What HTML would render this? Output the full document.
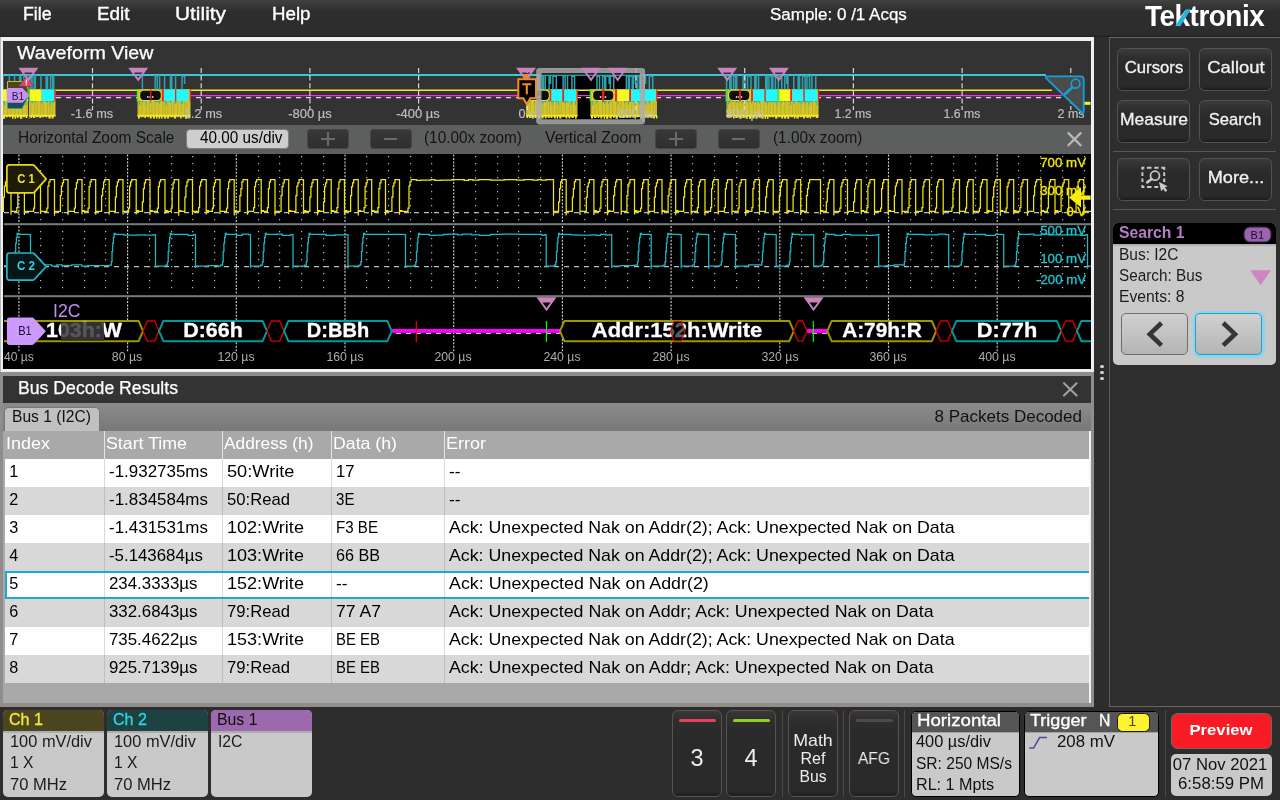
<!DOCTYPE html><html><head><meta charset="utf-8"><title>Scope</title><style>
*{margin:0;padding:0;box-sizing:border-box}
html,body{width:1280px;height:800px;overflow:hidden;background:#2d2d2d;font-family:"Liberation Sans",sans-serif;}
.a{position:absolute}
.t{position:absolute;white-space:nowrap;line-height:1.15}
svg{overflow:visible}
</style></head><body><div id="w" style="position:absolute;left:0;top:0;width:1280px;height:800px;will-change:transform;overflow:hidden">
<div class="a" style="left:0px;top:0px;width:1280px;height:37px;background:linear-gradient(#414141 0px,#383838 5px,#2d2d2d 12px,#2d2d2d 35px,#222 36.5px);"></div>
<div class="t" style="left:22.9px;top:4px;font-size:18px;color:#fff;transform:scaleX(0.9825);transform-origin:left center;-webkit-text-stroke:0.35px #fff;">File</div>
<div class="t" style="left:96.9px;top:4px;font-size:18px;color:#fff;transform:scaleX(1.0477);transform-origin:left center;-webkit-text-stroke:0.35px #fff;">Edit</div>
<div class="t" style="left:175.2px;top:4px;font-size:18px;color:#fff;transform:scaleX(1.1591);transform-origin:left center;-webkit-text-stroke:0.35px #fff;">Utility</div>
<div class="t" style="left:271.9px;top:4px;font-size:18px;color:#fff;transform:scaleX(1.0399);transform-origin:left center;-webkit-text-stroke:0.35px #fff;">Help</div>
<div class="t" style="left:769.7px;top:5px;font-size:16.3px;color:#fff;transform:scaleX(1.0427);transform-origin:left center;-webkit-text-stroke:0.25px #fff;">Sample: 0 /1 Acqs</div>
<div class="t" style="left:1145.2px;top:-1px;font-size:29.6px;color:#fff;font-weight:bold;transform:scaleX(0.9425);transform-origin:left center;letter-spacing:-0.5px;">Tektronix</div>
<svg class="a" style="left:0;top:0" width="1280" height="40"><polygon points="1175.4,25.7 1180.6,25.7 1191,9.3 1186,9.3" fill="#1fb6e0"/></svg>
<div class="a" style="left:0px;top:37px;width:1094px;height:335px;background:#eeeff2;"></div>
<div class="a" style="left:0px;top:37px;width:1px;height:335px;background:#b8b8bc;"></div>
<div class="a" style="left:3px;top:41px;width:1088px;height:328px;background:#333333;"></div>
<div class="t" style="left:17.3px;top:43px;font-size:17.5px;color:#fff;transform:scaleX(1.1228);transform-origin:left center;-webkit-text-stroke:0.25px #fff;">Waveform View</div>
<div class="a" style="left:3px;top:125px;width:1088px;height:29px;background:#5d5e5e;"></div>
<div class="t" style="left:17.8px;top:129px;font-size:15.6px;color:#141414;transform:scaleX(0.9917);transform-origin:left center;">Horizontal Zoom Scale</div>
<div class="a" style="left:185.7px;top:128.7px;width:103.6px;height:20.5px;background:#cecece;border-radius:4px;border:1px solid #808080"></div>
<div class="t" style="left:199.5px;top:129px;font-size:15.6px;color:#000;transform:scaleX(0.9807);transform-origin:left center;">40.00 us/div</div>
<div class="a" style="left:307.3px;top:129.3px;width:41.5px;height:19.6px;background:linear-gradient(#383838,#2f2f2f);border-radius:3px;border:1px solid #454545"></div>
<div class="a" style="left:321.2px;top:138.2px;width:13.8px;height:2.2px;background:#6a6a6a;"></div>
<div class="a" style="left:326.7px;top:132px;width:2.6px;height:14.3px;background:#6a6a6a;"></div>
<div class="a" style="left:370.3px;top:129.3px;width:41.5px;height:19.6px;background:linear-gradient(#383838,#2f2f2f);border-radius:3px;border:1px solid #454545"></div>
<div class="a" style="left:383.6px;top:138.2px;width:13.8px;height:2.2px;background:#6a6a6a;"></div>
<div class="a" style="left:655.3px;top:129.3px;width:41.5px;height:19.6px;background:linear-gradient(#383838,#2f2f2f);border-radius:3px;border:1px solid #454545"></div>
<div class="a" style="left:669.2px;top:138.2px;width:13.8px;height:2.2px;background:#6a6a6a;"></div>
<div class="a" style="left:674.7px;top:132px;width:2.6px;height:14.3px;background:#6a6a6a;"></div>
<div class="a" style="left:718.3px;top:129.3px;width:41.5px;height:19.6px;background:linear-gradient(#383838,#2f2f2f);border-radius:3px;border:1px solid #454545"></div>
<div class="a" style="left:731.6px;top:138.2px;width:13.8px;height:2.2px;background:#6a6a6a;"></div>
<div class="t" style="left:424px;top:129px;font-size:15.6px;color:#141414;transform:scaleX(0.9829);transform-origin:left center;">(10.00x zoom)</div>
<div class="t" style="left:545px;top:129px;font-size:15.6px;color:#141414;transform:scaleX(1.0119);transform-origin:left center;">Vertical Zoom</div>
<div class="t" style="left:772.5px;top:129px;font-size:15.6px;color:#141414;transform:scaleX(0.9832);transform-origin:left center;">(1.00x zoom)</div>
<svg class="a" style="left:1066px;top:131px" width="17" height="17"><path d="M2.4 2.1L14.6 14.3M14.6 2.1L2.4 14.3" stroke="#b7b7b7" stroke-width="2.3" stroke-linecap="round" fill="none"/></svg>
<div class="a" style="left:3px;top:154px;width:1088px;height:215px;background:#000;"></div>
<div class="a" style="left:0px;top:372px;width:1094px;height:335px;background:#928d8b;"></div>
<div class="a" style="left:3px;top:376px;width:1088px;height:27px;background:#333333;"></div>
<div class="t" style="left:17.5px;top:378px;font-size:17.5px;color:#fff;transform:scaleX(1.0091);transform-origin:left center;-webkit-text-stroke:0.25px #fff;">Bus Decode Results</div>
<svg class="a" style="left:1062px;top:381px" width="17" height="17"><path d="M2 2.3L14.6 14.6M14.6 2.3L2 14.6" stroke="#a0a0a8" stroke-width="2.1" stroke-linecap="round" fill="none"/></svg>
<div class="a" style="left:3px;top:403px;width:1088px;height:28px;background:linear-gradient(#8c8c8c,#787878);"></div>
<div class="a" style="left:3.8px;top:407.3px;width:95.8px;height:23.7px;background:#c0c0c0;border-radius:5px 5px 0 0;border:1px solid #7a7a7a;border-bottom:none"></div>
<div class="t" style="left:12.3px;top:407px;font-size:16.5px;color:#111;transform:scaleX(0.9467);transform-origin:left center;">Bus 1 (I2C)</div>
<div class="t" style="left:481.50px;width:600px;text-align:right;top:407px;font-size:16.5px;color:#111;transform:scaleX(1.0309);transform-origin:right center;">8 Packets Decoded</div>
<div class="a" style="left:3px;top:431px;width:1088px;height:272px;background:#a9a9a9;"></div>
<div class="a" style="left:1100px;top:364.5px;width:4px;height:3.5px;background:#cfcfcf;border-radius:2px"></div>
<div class="a" style="left:1100px;top:370.5px;width:4px;height:3.5px;background:#cfcfcf;border-radius:2px"></div>
<div class="a" style="left:1100px;top:376.5px;width:4px;height:3.5px;background:#cfcfcf;border-radius:2px"></div>
<div class="a" style="left:5px;top:431px;width:1084px;height:28px;background:#a9a9a9;"></div>
<div class="t" style="left:6px;top:434px;font-size:16.5px;color:#fff;transform:scaleX(1.0901);transform-origin:left center;">Index</div>
<div class="t" style="left:106px;top:434px;font-size:16.5px;color:#fff;transform:scaleX(1.0773);transform-origin:left center;">Start Time</div>
<div class="t" style="left:223.7px;top:434px;font-size:16.5px;color:#fff;transform:scaleX(1.0495);transform-origin:left center;">Address (h)</div>
<div class="t" style="left:333px;top:434px;font-size:16.5px;color:#fff;transform:scaleX(1.0737);transform-origin:left center;">Data (h)</div>
<div class="t" style="left:446px;top:434px;font-size:16.5px;color:#fff;transform:scaleX(1.0909);transform-origin:left center;">Error</div>
<div class="a" style="left:5px;top:459px;width:1084px;height:28px;background:#ffffff;"></div>
<div class="t" style="left:9.3px;top:462px;font-size:16.2px;color:#000;">1</div>
<div class="t" style="left:108.8px;top:462px;font-size:16.2px;color:#000;transform:scaleX(1.0469);transform-origin:left center;">-1.932735ms</div>
<div class="t" style="left:227px;top:462px;font-size:16.2px;color:#000;transform:scaleX(1.1245);transform-origin:left center;">50:Write</div>
<div class="t" style="left:336px;top:462px;font-size:16.2px;color:#000;transform:scaleX(1.0265);transform-origin:left center;">17</div>
<div class="t" style="left:448.8px;top:462px;font-size:16.2px;color:#000;transform:scaleX(1.0661);transform-origin:left center;">--</div>
<div class="a" style="left:5px;top:487px;width:1084px;height:28px;background:#d8d8d8;"></div>
<div class="t" style="left:9.3px;top:490px;font-size:16.2px;color:#000;">2</div>
<div class="t" style="left:108.8px;top:490px;font-size:16.2px;color:#000;transform:scaleX(1.0469);transform-origin:left center;">-1.834584ms</div>
<div class="t" style="left:227px;top:490px;font-size:16.2px;color:#000;transform:scaleX(1.0285);transform-origin:left center;">50:Read</div>
<div class="t" style="left:336px;top:490px;font-size:16.2px;color:#000;transform:scaleX(0.9335);transform-origin:left center;">3E</div>
<div class="t" style="left:448.8px;top:490px;font-size:16.2px;color:#000;transform:scaleX(1.0661);transform-origin:left center;">--</div>
<div class="a" style="left:5px;top:515px;width:1084px;height:28px;background:#ffffff;"></div>
<div class="t" style="left:9.3px;top:518px;font-size:16.2px;color:#000;">3</div>
<div class="t" style="left:108.8px;top:518px;font-size:16.2px;color:#000;transform:scaleX(1.0469);transform-origin:left center;">-1.431531ms</div>
<div class="t" style="left:227px;top:518px;font-size:16.2px;color:#000;transform:scaleX(1.1153);transform-origin:left center;">102:Write</div>
<div class="t" style="left:336px;top:518px;font-size:16.2px;color:#000;transform:scaleX(0.9329);transform-origin:left center;">F3 BE</div>
<div class="t" style="left:448.8px;top:518px;font-size:16.2px;color:#000;transform:scaleX(1.0974);transform-origin:left center;">Ack: Unexpected Nak on Addr(2); Ack: Unexpected Nak on Data</div>
<div class="a" style="left:5px;top:543px;width:1084px;height:28px;background:#d8d8d8;"></div>
<div class="t" style="left:9.3px;top:546px;font-size:16.2px;color:#000;">4</div>
<div class="t" style="left:108.8px;top:546px;font-size:16.2px;color:#000;transform:scaleX(1.0397);transform-origin:left center;">-5.143684µs</div>
<div class="t" style="left:227px;top:546px;font-size:16.2px;color:#000;transform:scaleX(1.1153);transform-origin:left center;">103:Write</div>
<div class="t" style="left:336px;top:546px;font-size:16.2px;color:#000;">66 BB</div>
<div class="t" style="left:448.8px;top:546px;font-size:16.2px;color:#000;transform:scaleX(1.0974);transform-origin:left center;">Ack: Unexpected Nak on Addr(2); Ack: Unexpected Nak on Data</div>
<div class="a" style="left:5px;top:571px;width:1084px;height:28px;background:#ffffff;"></div>
<div class="a" style="left:5px;top:571px;width:1084px;height:28px;background:#fff;border:2px solid #1fa8d8;border-right:none"></div>
<div class="t" style="left:9.3px;top:574px;font-size:16.2px;color:#000;">5</div>
<div class="t" style="left:108.8px;top:574px;font-size:16.2px;color:#000;transform:scaleX(1.0410);transform-origin:left center;">234.3333µs</div>
<div class="t" style="left:227px;top:574px;font-size:16.2px;color:#000;transform:scaleX(1.1153);transform-origin:left center;">152:Write</div>
<div class="t" style="left:336px;top:574px;font-size:16.2px;color:#000;transform:scaleX(1.0661);transform-origin:left center;">--</div>
<div class="t" style="left:448.8px;top:574px;font-size:16.2px;color:#000;transform:scaleX(1.1020);transform-origin:left center;">Ack: Unexpected Nak on Addr(2)</div>
<div class="a" style="left:5px;top:599px;width:1084px;height:28px;background:#d8d8d8;"></div>
<div class="t" style="left:9.3px;top:602px;font-size:16.2px;color:#000;">6</div>
<div class="t" style="left:108.8px;top:602px;font-size:16.2px;color:#000;transform:scaleX(1.0410);transform-origin:left center;">332.6843µs</div>
<div class="t" style="left:227px;top:602px;font-size:16.2px;color:#000;transform:scaleX(1.0285);transform-origin:left center;">79:Read</div>
<div class="t" style="left:336px;top:602px;font-size:16.2px;color:#000;transform:scaleX(1.0857);transform-origin:left center;">77 A7</div>
<div class="t" style="left:448.8px;top:602px;font-size:16.2px;color:#000;transform:scaleX(1.0991);transform-origin:left center;">Ack: Unexpected Nak on Addr; Ack: Unexpected Nak on Data</div>
<div class="a" style="left:5px;top:627px;width:1084px;height:28px;background:#ffffff;"></div>
<div class="t" style="left:9.3px;top:630px;font-size:16.2px;color:#000;">7</div>
<div class="t" style="left:108.8px;top:630px;font-size:16.2px;color:#000;transform:scaleX(1.0410);transform-origin:left center;">735.4622µs</div>
<div class="t" style="left:227px;top:630px;font-size:16.2px;color:#000;transform:scaleX(1.1153);transform-origin:left center;">153:Write</div>
<div class="t" style="left:336px;top:630px;font-size:16.2px;color:#000;transform:scaleX(0.9219);transform-origin:left center;">BE EB</div>
<div class="t" style="left:448.8px;top:630px;font-size:16.2px;color:#000;transform:scaleX(1.0974);transform-origin:left center;">Ack: Unexpected Nak on Addr(2); Ack: Unexpected Nak on Data</div>
<div class="a" style="left:5px;top:655px;width:1084px;height:28px;background:#d8d8d8;"></div>
<div class="t" style="left:9.3px;top:658px;font-size:16.2px;color:#000;">8</div>
<div class="t" style="left:108.8px;top:658px;font-size:16.2px;color:#000;transform:scaleX(1.0410);transform-origin:left center;">925.7139µs</div>
<div class="t" style="left:227px;top:658px;font-size:16.2px;color:#000;transform:scaleX(1.0285);transform-origin:left center;">79:Read</div>
<div class="t" style="left:336px;top:658px;font-size:16.2px;color:#000;transform:scaleX(0.9219);transform-origin:left center;">BE EB</div>
<div class="t" style="left:448.8px;top:658px;font-size:16.2px;color:#000;transform:scaleX(1.0991);transform-origin:left center;">Ack: Unexpected Nak on Addr; Ack: Unexpected Nak on Data</div>
<div class="a" style="left:104px;top:431px;width:1px;height:28px;background:#e6e6e6;"></div>
<div class="a" style="left:104px;top:459px;width:1px;height:224px;background:rgba(120,120,120,0.28);"></div>
<div class="a" style="left:222px;top:431px;width:1px;height:28px;background:#e6e6e6;"></div>
<div class="a" style="left:222px;top:459px;width:1px;height:224px;background:rgba(120,120,120,0.28);"></div>
<div class="a" style="left:331px;top:431px;width:1px;height:28px;background:#e6e6e6;"></div>
<div class="a" style="left:331px;top:459px;width:1px;height:224px;background:rgba(120,120,120,0.28);"></div>
<div class="a" style="left:444px;top:431px;width:1px;height:28px;background:#e6e6e6;"></div>
<div class="a" style="left:444px;top:459px;width:1px;height:224px;background:rgba(120,120,120,0.28);"></div>
<div class="a" style="left:1089px;top:431px;width:1.5px;height:272px;background:#f4f4f4;"></div>
<div class="a" style="left:3px;top:710px;width:101px;height:87px;background:#c9c9c9;border-radius:5px;overflow:hidden"></div>
<div class="a" style="left:3px;top:710px;width:101px;height:21px;background:#4b4620;border-radius:5px 5px 0 0"></div>
<div class="a" style="left:3px;top:731px;width:101px;height:1.8px;background:#adadad;"></div>
<div class="t" style="left:8.6px;top:711px;font-size:15.6px;color:#f4ea30;transform:scaleX(1.0318);transform-origin:left center;-webkit-text-stroke:0.3px #f4ea30;">Ch 1</div>
<div class="t" style="left:9.8px;top:732px;font-size:16.2px;color:#1c1c1c;transform:scaleX(1.0118);transform-origin:left center;">100 mV/div</div>
<div class="t" style="left:9.8px;top:753px;font-size:16.2px;color:#1c1c1c;transform:scaleX(0.9663);transform-origin:left center;">1 X</div>
<div class="t" style="left:9.8px;top:775px;font-size:16.2px;color:#1c1c1c;transform:scaleX(1.0212);transform-origin:left center;">70 MHz</div>
<div class="a" style="left:107px;top:710px;width:101px;height:87px;background:#c9c9c9;border-radius:5px;overflow:hidden"></div>
<div class="a" style="left:107px;top:710px;width:101px;height:21px;background:#1e4141;border-radius:5px 5px 0 0"></div>
<div class="a" style="left:107px;top:731px;width:101px;height:1.8px;background:#adadad;"></div>
<div class="t" style="left:112.6px;top:711px;font-size:15.6px;color:#29d8e2;transform:scaleX(1.0318);transform-origin:left center;-webkit-text-stroke:0.3px #29d8e2;">Ch 2</div>
<div class="t" style="left:113.8px;top:732px;font-size:16.2px;color:#1c1c1c;transform:scaleX(1.0118);transform-origin:left center;">100 mV/div</div>
<div class="t" style="left:113.8px;top:753px;font-size:16.2px;color:#1c1c1c;transform:scaleX(0.9663);transform-origin:left center;">1 X</div>
<div class="t" style="left:113.8px;top:775px;font-size:16.2px;color:#1c1c1c;transform:scaleX(1.0212);transform-origin:left center;">70 MHz</div>
<div class="a" style="left:211px;top:710px;width:101px;height:87px;background:#c9c9c9;border-radius:5px;overflow:hidden"></div>
<div class="a" style="left:211px;top:710px;width:101px;height:21px;background:#9d69ae;border-radius:5px 5px 0 0"></div>
<div class="a" style="left:211px;top:731px;width:101px;height:1.8px;background:#adadad;"></div>
<div class="t" style="left:216.6px;top:711px;font-size:15.6px;color:#0c0c0c;transform:scaleX(1.0152);transform-origin:left center;-webkit-text-stroke:0.3px rgba(0,0,0,0);">Bus 1</div>
<div class="t" style="left:217.8px;top:732px;font-size:16.2px;color:#1c1c1c;transform:scaleX(0.9718);transform-origin:left center;">I2C</div>
<div class="a" style="left:672px;top:710px;width:50px;height:87px;background:linear-gradient(#38383a 0%,#2f2f30 10%,#2a2a2a 25%,#2a2a2a 94%,#1e1e1e 100%);border-radius:6px;border:1.3px solid #5a524c"></div>
<div class="a" style="left:679px;top:718.8px;width:37px;height:3px;background:#e8405c;border-radius:1.5px"></div>
<div class="t" style="left:397.00px;width:600px;text-align:center;top:745px;font-size:23.5px;color:#ececec;">3</div>
<div class="a" style="left:726px;top:710px;width:50px;height:87px;background:linear-gradient(#38383a 0%,#2f2f30 10%,#2a2a2a 25%,#2a2a2a 94%,#1e1e1e 100%);border-radius:6px;border:1.3px solid #5a524c"></div>
<div class="a" style="left:733px;top:718.8px;width:37px;height:3px;background:#8ed021;border-radius:1.5px"></div>
<div class="t" style="left:451.00px;width:600px;text-align:center;top:745px;font-size:23.5px;color:#ececec;">4</div>
<div class="a" style="left:788px;top:710px;width:50px;height:87px;background:linear-gradient(#38383a 0%,#2f2f30 10%,#2a2a2a 25%,#2a2a2a 94%,#1e1e1e 100%);border-radius:6px;border:1.3px solid #5a524c"></div>
<div class="t" style="left:513.00px;width:600px;text-align:center;top:731px;font-size:17px;color:#ececec;transform:scaleX(1.0453);transform-origin:center center;">Math</div>
<div class="t" style="left:513.00px;width:600px;text-align:center;top:749px;font-size:17px;color:#ececec;transform:scaleX(0.9451);transform-origin:center center;">Ref</div>
<div class="t" style="left:513.00px;width:600px;text-align:center;top:767px;font-size:17px;color:#ececec;transform:scaleX(0.9217);transform-origin:center center;">Bus</div>
<div class="a" style="left:849px;top:710px;width:50px;height:87px;background:linear-gradient(#38383a 0%,#2f2f30 10%,#2a2a2a 25%,#2a2a2a 94%,#1e1e1e 100%);border-radius:6px;border:1.3px solid #5a524c"></div>
<div class="a" style="left:856px;top:718.8px;width:37px;height:3px;background:#4c4c4c;border-radius:1.5px"></div>
<div class="t" style="left:573.70px;width:600px;text-align:center;top:749px;font-size:17px;color:#ececec;transform:scaleX(0.9157);transform-origin:center center;">AFG</div>
<div class="a" style="left:782px;top:710px;width:1.4px;height:87px;background:#4d4844;"></div>
<div class="a" style="left:843px;top:710px;width:1.4px;height:87px;background:#4d4844;"></div>
<div class="a" style="left:904px;top:710px;width:1.4px;height:87px;background:#4d4844;"></div>
<div class="a" style="left:1165px;top:710px;width:1.4px;height:87px;background:#4d4844;"></div>
<div class="a" style="left:910.5px;top:710.5px;width:109px;height:86px;background:#c9c9c9;border-radius:5px;border:1px solid #000;overflow:hidden"></div>
<div class="a" style="left:911.5px;top:711.5px;width:107px;height:20px;background:#555555;border-radius:4px 4px 0 0"></div>
<div class="a" style="left:911.5px;top:731.5px;width:107px;height:1.6px;background:#a2a2a2;"></div>
<div class="t" style="left:916.7px;top:712px;font-size:15.8px;color:#fff;transform:scaleX(1.1810);transform-origin:left center;-webkit-text-stroke:0.3px #fff;">Horizontal</div>
<div class="t" style="left:915.5px;top:732px;font-size:16.2px;color:#111;transform:scaleX(1.0110);transform-origin:left center;">400 µs/div</div>
<div class="t" style="left:915.5px;top:754px;font-size:16.2px;color:#111;transform:scaleX(0.9605);transform-origin:left center;">SR: 250 MS/s</div>
<div class="t" style="left:915.5px;top:775px;font-size:16.2px;color:#111;transform:scaleX(0.9958);transform-origin:left center;">RL: 1 Mpts</div>
<div class="a" style="left:1023.5px;top:710.5px;width:135px;height:86px;background:#c9c9c9;border-radius:5px;border:1px solid #000;overflow:hidden"></div>
<div class="a" style="left:1024.5px;top:711.5px;width:133px;height:20px;background:#555555;border-radius:4px 4px 0 0"></div>
<div class="a" style="left:1024.5px;top:731.5px;width:133px;height:1.6px;background:#a2a2a2;"></div>
<div class="t" style="left:1030.2px;top:712px;font-size:15.8px;color:#fff;transform:scaleX(1.1424);transform-origin:left center;-webkit-text-stroke:0.3px #fff;">Trigger</div>
<div class="t" style="left:1098.9px;top:712px;font-size:15.8px;color:#fff;-webkit-text-stroke:0.3px #fff;">N</div>
<div class="a" style="left:1116.5px;top:713.3px;width:33px;height:18.3px;background:#fff230;border-radius:5.5px;border:1px solid #1a1a1a"></div>
<div class="t" style="left:832.40px;width:600px;text-align:center;top:713px;font-size:14.5px;color:#4a4508;">1</div>
<svg class="a" style="left:1028px;top:734px" width="22" height="16"><path d="M1.2 14 H5.6 L11.6 3.6 H19" stroke="#54459a" stroke-width="1.5" fill="none"/></svg>
<div class="t" style="left:1056.5px;top:732px;font-size:16.2px;color:#111;transform:scaleX(1.0388);transform-origin:left center;">208 mV</div>
<div class="a" style="left:1171px;top:713.3px;width:101px;height:35.5px;background:#f71b25;border-radius:6.5px;border:1px solid #6a6a6a"></div>
<div class="t" style="left:921.30px;width:600px;text-align:center;top:721px;font-size:15px;color:#fff;font-weight:bold;transform:scaleX(1.1110);transform-origin:center center;">Preview</div>
<div class="a" style="left:1171px;top:753.8px;width:100.5px;height:42px;background:#c9c9c9;border-radius:5px"></div>
<div class="t" style="left:920.30px;width:600px;text-align:center;top:755px;font-size:16.2px;color:#111;transform:scaleX(1.0285);transform-origin:center center;">07 Nov 2021</div>
<div class="t" style="left:920.60px;width:600px;text-align:center;top:774px;font-size:16.2px;color:#111;transform:scaleX(1.0379);transform-origin:center center;">6:58:59 PM</div>
<div class="a" style="left:1109px;top:37px;width:171px;height:1.4px;background:#6e655d;"></div>
<div class="a" style="left:1109px;top:37px;width:1.4px;height:670px;background:#5b5d5f;"></div>
<div class="a" style="left:1109px;top:705.6px;width:171px;height:1.4px;background:#6e655d;"></div>
<div class="a" style="left:1110.4px;top:38.4px;width:170px;height:667.2px;background:#2e2e2e;"></div>
<div class="a" style="left:1117px;top:47.5px;width:72.5px;height:43.5px;background:linear-gradient(#3b3b3d 0%,#313132 16%,#2a2a2a 36%,#2a2a2a 90%,#1d1d1d 100%);border-radius:5.5px;border:1.5px solid #58514b"></div>
<div class="t" style="left:853.70px;width:600px;text-align:center;top:58px;font-size:17px;color:#f2f2f2;transform:scaleX(0.9831);transform-origin:center center;-webkit-text-stroke:0.3px #f2f2f2;">Cursors</div>
<div class="a" style="left:1199px;top:47.5px;width:72.5px;height:43.5px;background:linear-gradient(#3b3b3d 0%,#313132 16%,#2a2a2a 36%,#2a2a2a 90%,#1d1d1d 100%);border-radius:5.5px;border:1.5px solid #58514b"></div>
<div class="t" style="left:935.50px;width:600px;text-align:center;top:58px;font-size:17px;color:#f2f2f2;transform:scaleX(1.0867);transform-origin:center center;-webkit-text-stroke:0.3px #f2f2f2;">Callout</div>
<div class="a" style="left:1117px;top:99.5px;width:72.5px;height:43.5px;background:linear-gradient(#3b3b3d 0%,#313132 16%,#2a2a2a 36%,#2a2a2a 90%,#1d1d1d 100%);border-radius:5.5px;border:1.5px solid #58514b"></div>
<div class="t" style="left:853.60px;width:600px;text-align:center;top:110px;font-size:17px;color:#f2f2f2;transform:scaleX(1.0282);transform-origin:center center;-webkit-text-stroke:0.3px #f2f2f2;">Measure</div>
<div class="a" style="left:1199px;top:99.5px;width:72.5px;height:43.5px;background:linear-gradient(#3b3b3d 0%,#313132 16%,#2a2a2a 36%,#2a2a2a 90%,#1d1d1d 100%);border-radius:5.5px;border:1.5px solid #58514b"></div>
<div class="t" style="left:935.00px;width:600px;text-align:center;top:110px;font-size:17px;color:#f2f2f2;transform:scaleX(0.9748);transform-origin:center center;-webkit-text-stroke:0.3px #f2f2f2;">Search</div>
<div class="a" style="left:1113px;top:151px;width:163px;height:1.4px;background:#5e564e;"></div>
<div class="a" style="left:1117px;top:158px;width:72.5px;height:43px;background:linear-gradient(#3b3b3d 0%,#313132 16%,#2a2a2a 36%,#2a2a2a 90%,#1d1d1d 100%);border-radius:5.5px;border:1.5px solid #58514b"></div>
<div class="a" style="left:1199px;top:158px;width:72.5px;height:43px;background:linear-gradient(#3b3b3d 0%,#313132 16%,#2a2a2a 36%,#2a2a2a 90%,#1d1d1d 100%);border-radius:5.5px;border:1.5px solid #58514b"></div>
<div class="t" style="left:935.50px;width:600px;text-align:center;top:168px;font-size:17px;color:#f2f2f2;transform:scaleX(1.0682);transform-origin:center center;-webkit-text-stroke:0.3px #f2f2f2;">More...</div>
<div class="a" style="left:1113px;top:208.8px;width:163px;height:1.4px;background:#5e564e;"></div>
<svg class="a" style="left:0;top:0" width="1280" height="800">
<path d="M1142.4 169.7V167.8H1144.4 M1147 167.8H1151.5 M1154.3 167.8H1158.6 M1161.3 167.8H1164.2V170 M1142.4 172.2V176 M1142.4 178.5V182 M1142.4 185V187H1144.4 M1147 187H1151.5 M1154.3 187H1158.3 M1164.2 172.2V176 M1164.2 178.5V182" fill="none" stroke="#c9c9c9" stroke-width="2"/>
<circle cx="1155" cy="175.7" r="4.5" fill="none" stroke="#c9c9c9" stroke-width="1.7"/>
<path d="M1151.6 179 L1147.2 182.3" stroke="#c9c9c9" stroke-width="2.7" stroke-linecap="round"/>
<path d="M1159 182 L1167.6 186.3 L1164.8 187.6 L1167.3 190.6 L1165.4 192 L1163.2 189 L1161.2 191.2 Z" fill="#c9c9c9"/>
</svg>
<div class="a" style="left:1113px;top:222.6px;width:163px;height:142.4px;background:#c9c9c9;border-radius:5px;overflow:hidden"></div>
<div class="a" style="left:1113px;top:222.6px;width:163px;height:21.4px;background:#000;border-radius:5px 5px 0 0"></div>
<div class="a" style="left:1113px;top:244px;width:163px;height:2px;background:#b0b0b0;"></div>
<div class="t" style="left:1118.6px;top:223px;font-size:16.5px;color:#b57dc6;font-weight:bold;transform:scaleX(0.9521);transform-origin:left center;">Search 1</div>
<div class="a" style="left:1245px;top:228px;width:24.5px;height:12.5px;background:#9a62b0;border-radius:5px;box-shadow:0 0 2px 0.5px #b98ad0"></div>
<div class="t" style="left:957.30px;width:600px;text-align:center;top:229px;font-size:11px;color:#1c0c24;">B1</div>
<div class="t" style="left:1118.6px;top:245px;font-size:16.3px;color:#1c1c1c;transform:scaleX(0.9518);transform-origin:left center;">Bus: I2C</div>
<div class="t" style="left:1118.6px;top:266px;font-size:16.3px;color:#1c1c1c;transform:scaleX(0.9403);transform-origin:left center;">Search: Bus</div>
<div class="t" style="left:1118.6px;top:287px;font-size:16.3px;color:#1c1c1c;transform:scaleX(0.9638);transform-origin:left center;">Events: 8</div>
<svg class="a" style="left:1250px;top:269.5px" width="22" height="18"><polygon points="0.3,0.3 21,0.3 10.6,15.3" fill="#cf85c2"/></svg>
<div class="a" style="left:1121.3px;top:313.3px;width:66.7px;height:41.7px;background:linear-gradient(#d0d0d0,#b3b5b3);border-radius:5px;border:1px solid #6e6e6e"></div>
<div class="a" style="left:1192.6px;top:310.6px;width:72px;height:47px;background:#8fd4e8;border-radius:7.5px"></div>
<div class="a" style="left:1195.2px;top:313.2px;width:66.6px;height:41.8px;background:linear-gradient(#d0d0d0,#b3b5b3);border-radius:5px;border:1px solid #1e9ed0"></div>
<svg class="a" style="left:1121px;top:313px" width="67" height="42"><path d="M40.5 10 L28.8 21.2 L40.5 32.4" stroke="#353535" stroke-width="4.6" fill="none"/></svg>
<svg class="a" style="left:1195px;top:313px" width="67" height="42"><path d="M28.2 10 L40 21.2 L28.2 32.4" stroke="#353535" stroke-width="4.6" fill="none"/></svg>
<svg class="a" style="left:0;top:0" width="1280" height="800" viewBox="0 0 1280 800"><defs><clipPath id="cm"><rect x="4" y="154" width="1087" height="215"/></clipPath></defs><path d="M18.9 154.5V223 M18.9 226V295 M18.9 297.5V352.6" stroke="#d0d0d0" stroke-width="1.15" stroke-dasharray="2 1.45" fill="none"/><path d="M127.6 154.5V223 M127.6 226V295 M127.6 297.5V352.6" stroke="#d0d0d0" stroke-width="1.15" stroke-dasharray="2 1.45" fill="none"/><path d="M236.3 154.5V223 M236.3 226V295 M236.3 297.5V352.6" stroke="#d0d0d0" stroke-width="1.15" stroke-dasharray="2 1.45" fill="none"/><path d="M345 154.5V223 M345 226V295 M345 297.5V352.6" stroke="#d0d0d0" stroke-width="1.15" stroke-dasharray="2 1.45" fill="none"/><path d="M453.7 154.5V223 M453.7 226V295 M453.7 297.5V352.6" stroke="#d0d0d0" stroke-width="1.15" stroke-dasharray="2 1.45" fill="none"/><path d="M562.4 154.5V223 M562.4 226V295 M562.4 297.5V352.6" stroke="#d0d0d0" stroke-width="1.15" stroke-dasharray="2 1.45" fill="none"/><path d="M671.1 154.5V223 M671.1 226V295 M671.1 297.5V352.6" stroke="#d0d0d0" stroke-width="1.15" stroke-dasharray="2 1.45" fill="none"/><path d="M779.8 154.5V223 M779.8 226V295 M779.8 297.5V352.6" stroke="#d0d0d0" stroke-width="1.15" stroke-dasharray="2 1.45" fill="none"/><path d="M888.5 154.5V223 M888.5 226V295 M888.5 297.5V352.6" stroke="#d0d0d0" stroke-width="1.15" stroke-dasharray="2 1.45" fill="none"/><path d="M997.2 154.5V223 M997.2 226V295 M997.2 297.5V352.6" stroke="#d0d0d0" stroke-width="1.15" stroke-dasharray="2 1.45" fill="none"/><path d="M40 156h1.2v1.2h-1.2zM40 163h1.2v1.2h-1.2zM40 170h1.2v1.2h-1.2zM40 177h1.2v1.2h-1.2zM40 184h1.2v1.2h-1.2zM40 191h1.2v1.2h-1.2zM40 198h1.2v1.2h-1.2zM40 205h1.2v1.2h-1.2zM40 212h1.2v1.2h-1.2zM40 219h1.2v1.2h-1.2zM40 231h1.2v1.2h-1.2zM40 238h1.2v1.2h-1.2zM40 245h1.2v1.2h-1.2zM40 252h1.2v1.2h-1.2zM40 259h1.2v1.2h-1.2zM40 266h1.2v1.2h-1.2zM40 273h1.2v1.2h-1.2zM40 280h1.2v1.2h-1.2zM40 287h1.2v1.2h-1.2zM62 156h1.2v1.2h-1.2zM62 163h1.2v1.2h-1.2zM62 170h1.2v1.2h-1.2zM62 177h1.2v1.2h-1.2zM62 184h1.2v1.2h-1.2zM62 191h1.2v1.2h-1.2zM62 198h1.2v1.2h-1.2zM62 205h1.2v1.2h-1.2zM62 212h1.2v1.2h-1.2zM62 219h1.2v1.2h-1.2zM62 231h1.2v1.2h-1.2zM62 238h1.2v1.2h-1.2zM62 245h1.2v1.2h-1.2zM62 252h1.2v1.2h-1.2zM62 259h1.2v1.2h-1.2zM62 266h1.2v1.2h-1.2zM62 273h1.2v1.2h-1.2zM62 280h1.2v1.2h-1.2zM62 287h1.2v1.2h-1.2zM84 156h1.2v1.2h-1.2zM84 163h1.2v1.2h-1.2zM84 170h1.2v1.2h-1.2zM84 177h1.2v1.2h-1.2zM84 184h1.2v1.2h-1.2zM84 191h1.2v1.2h-1.2zM84 198h1.2v1.2h-1.2zM84 205h1.2v1.2h-1.2zM84 212h1.2v1.2h-1.2zM84 219h1.2v1.2h-1.2zM84 231h1.2v1.2h-1.2zM84 238h1.2v1.2h-1.2zM84 245h1.2v1.2h-1.2zM84 252h1.2v1.2h-1.2zM84 259h1.2v1.2h-1.2zM84 266h1.2v1.2h-1.2zM84 273h1.2v1.2h-1.2zM84 280h1.2v1.2h-1.2zM84 287h1.2v1.2h-1.2zM105 156h1.2v1.2h-1.2zM105 163h1.2v1.2h-1.2zM105 170h1.2v1.2h-1.2zM105 177h1.2v1.2h-1.2zM105 184h1.2v1.2h-1.2zM105 191h1.2v1.2h-1.2zM105 198h1.2v1.2h-1.2zM105 205h1.2v1.2h-1.2zM105 212h1.2v1.2h-1.2zM105 219h1.2v1.2h-1.2zM105 231h1.2v1.2h-1.2zM105 238h1.2v1.2h-1.2zM105 245h1.2v1.2h-1.2zM105 252h1.2v1.2h-1.2zM105 259h1.2v1.2h-1.2zM105 266h1.2v1.2h-1.2zM105 273h1.2v1.2h-1.2zM105 280h1.2v1.2h-1.2zM105 287h1.2v1.2h-1.2zM149 156h1.2v1.2h-1.2zM149 163h1.2v1.2h-1.2zM149 170h1.2v1.2h-1.2zM149 177h1.2v1.2h-1.2zM149 184h1.2v1.2h-1.2zM149 191h1.2v1.2h-1.2zM149 198h1.2v1.2h-1.2zM149 205h1.2v1.2h-1.2zM149 212h1.2v1.2h-1.2zM149 219h1.2v1.2h-1.2zM149 231h1.2v1.2h-1.2zM149 238h1.2v1.2h-1.2zM149 245h1.2v1.2h-1.2zM149 252h1.2v1.2h-1.2zM149 259h1.2v1.2h-1.2zM149 266h1.2v1.2h-1.2zM149 273h1.2v1.2h-1.2zM149 280h1.2v1.2h-1.2zM149 287h1.2v1.2h-1.2zM171 156h1.2v1.2h-1.2zM171 163h1.2v1.2h-1.2zM171 170h1.2v1.2h-1.2zM171 177h1.2v1.2h-1.2zM171 184h1.2v1.2h-1.2zM171 191h1.2v1.2h-1.2zM171 198h1.2v1.2h-1.2zM171 205h1.2v1.2h-1.2zM171 212h1.2v1.2h-1.2zM171 219h1.2v1.2h-1.2zM171 231h1.2v1.2h-1.2zM171 238h1.2v1.2h-1.2zM171 245h1.2v1.2h-1.2zM171 252h1.2v1.2h-1.2zM171 259h1.2v1.2h-1.2zM171 266h1.2v1.2h-1.2zM171 273h1.2v1.2h-1.2zM171 280h1.2v1.2h-1.2zM171 287h1.2v1.2h-1.2zM192 156h1.2v1.2h-1.2zM192 163h1.2v1.2h-1.2zM192 170h1.2v1.2h-1.2zM192 177h1.2v1.2h-1.2zM192 184h1.2v1.2h-1.2zM192 191h1.2v1.2h-1.2zM192 198h1.2v1.2h-1.2zM192 205h1.2v1.2h-1.2zM192 212h1.2v1.2h-1.2zM192 219h1.2v1.2h-1.2zM192 231h1.2v1.2h-1.2zM192 238h1.2v1.2h-1.2zM192 245h1.2v1.2h-1.2zM192 252h1.2v1.2h-1.2zM192 259h1.2v1.2h-1.2zM192 266h1.2v1.2h-1.2zM192 273h1.2v1.2h-1.2zM192 280h1.2v1.2h-1.2zM192 287h1.2v1.2h-1.2zM214 156h1.2v1.2h-1.2zM214 163h1.2v1.2h-1.2zM214 170h1.2v1.2h-1.2zM214 177h1.2v1.2h-1.2zM214 184h1.2v1.2h-1.2zM214 191h1.2v1.2h-1.2zM214 198h1.2v1.2h-1.2zM214 205h1.2v1.2h-1.2zM214 212h1.2v1.2h-1.2zM214 219h1.2v1.2h-1.2zM214 231h1.2v1.2h-1.2zM214 238h1.2v1.2h-1.2zM214 245h1.2v1.2h-1.2zM214 252h1.2v1.2h-1.2zM214 259h1.2v1.2h-1.2zM214 266h1.2v1.2h-1.2zM214 273h1.2v1.2h-1.2zM214 280h1.2v1.2h-1.2zM214 287h1.2v1.2h-1.2zM258 156h1.2v1.2h-1.2zM258 163h1.2v1.2h-1.2zM258 170h1.2v1.2h-1.2zM258 177h1.2v1.2h-1.2zM258 184h1.2v1.2h-1.2zM258 191h1.2v1.2h-1.2zM258 198h1.2v1.2h-1.2zM258 205h1.2v1.2h-1.2zM258 212h1.2v1.2h-1.2zM258 219h1.2v1.2h-1.2zM258 231h1.2v1.2h-1.2zM258 238h1.2v1.2h-1.2zM258 245h1.2v1.2h-1.2zM258 252h1.2v1.2h-1.2zM258 259h1.2v1.2h-1.2zM258 266h1.2v1.2h-1.2zM258 273h1.2v1.2h-1.2zM258 280h1.2v1.2h-1.2zM258 287h1.2v1.2h-1.2zM279 156h1.2v1.2h-1.2zM279 163h1.2v1.2h-1.2zM279 170h1.2v1.2h-1.2zM279 177h1.2v1.2h-1.2zM279 184h1.2v1.2h-1.2zM279 191h1.2v1.2h-1.2zM279 198h1.2v1.2h-1.2zM279 205h1.2v1.2h-1.2zM279 212h1.2v1.2h-1.2zM279 219h1.2v1.2h-1.2zM279 231h1.2v1.2h-1.2zM279 238h1.2v1.2h-1.2zM279 245h1.2v1.2h-1.2zM279 252h1.2v1.2h-1.2zM279 259h1.2v1.2h-1.2zM279 266h1.2v1.2h-1.2zM279 273h1.2v1.2h-1.2zM279 280h1.2v1.2h-1.2zM279 287h1.2v1.2h-1.2zM301 156h1.2v1.2h-1.2zM301 163h1.2v1.2h-1.2zM301 170h1.2v1.2h-1.2zM301 177h1.2v1.2h-1.2zM301 184h1.2v1.2h-1.2zM301 191h1.2v1.2h-1.2zM301 198h1.2v1.2h-1.2zM301 205h1.2v1.2h-1.2zM301 212h1.2v1.2h-1.2zM301 219h1.2v1.2h-1.2zM301 231h1.2v1.2h-1.2zM301 238h1.2v1.2h-1.2zM301 245h1.2v1.2h-1.2zM301 252h1.2v1.2h-1.2zM301 259h1.2v1.2h-1.2zM301 266h1.2v1.2h-1.2zM301 273h1.2v1.2h-1.2zM301 280h1.2v1.2h-1.2zM301 287h1.2v1.2h-1.2zM323 156h1.2v1.2h-1.2zM323 163h1.2v1.2h-1.2zM323 170h1.2v1.2h-1.2zM323 177h1.2v1.2h-1.2zM323 184h1.2v1.2h-1.2zM323 191h1.2v1.2h-1.2zM323 198h1.2v1.2h-1.2zM323 205h1.2v1.2h-1.2zM323 212h1.2v1.2h-1.2zM323 219h1.2v1.2h-1.2zM323 231h1.2v1.2h-1.2zM323 238h1.2v1.2h-1.2zM323 245h1.2v1.2h-1.2zM323 252h1.2v1.2h-1.2zM323 259h1.2v1.2h-1.2zM323 266h1.2v1.2h-1.2zM323 273h1.2v1.2h-1.2zM323 280h1.2v1.2h-1.2zM323 287h1.2v1.2h-1.2zM366 156h1.2v1.2h-1.2zM366 163h1.2v1.2h-1.2zM366 170h1.2v1.2h-1.2zM366 177h1.2v1.2h-1.2zM366 184h1.2v1.2h-1.2zM366 191h1.2v1.2h-1.2zM366 198h1.2v1.2h-1.2zM366 205h1.2v1.2h-1.2zM366 212h1.2v1.2h-1.2zM366 219h1.2v1.2h-1.2zM366 231h1.2v1.2h-1.2zM366 238h1.2v1.2h-1.2zM366 245h1.2v1.2h-1.2zM366 252h1.2v1.2h-1.2zM366 259h1.2v1.2h-1.2zM366 266h1.2v1.2h-1.2zM366 273h1.2v1.2h-1.2zM366 280h1.2v1.2h-1.2zM366 287h1.2v1.2h-1.2zM388 156h1.2v1.2h-1.2zM388 163h1.2v1.2h-1.2zM388 170h1.2v1.2h-1.2zM388 177h1.2v1.2h-1.2zM388 184h1.2v1.2h-1.2zM388 191h1.2v1.2h-1.2zM388 198h1.2v1.2h-1.2zM388 205h1.2v1.2h-1.2zM388 212h1.2v1.2h-1.2zM388 219h1.2v1.2h-1.2zM388 231h1.2v1.2h-1.2zM388 238h1.2v1.2h-1.2zM388 245h1.2v1.2h-1.2zM388 252h1.2v1.2h-1.2zM388 259h1.2v1.2h-1.2zM388 266h1.2v1.2h-1.2zM388 273h1.2v1.2h-1.2zM388 280h1.2v1.2h-1.2zM388 287h1.2v1.2h-1.2zM410 156h1.2v1.2h-1.2zM410 163h1.2v1.2h-1.2zM410 170h1.2v1.2h-1.2zM410 177h1.2v1.2h-1.2zM410 184h1.2v1.2h-1.2zM410 191h1.2v1.2h-1.2zM410 198h1.2v1.2h-1.2zM410 205h1.2v1.2h-1.2zM410 212h1.2v1.2h-1.2zM410 219h1.2v1.2h-1.2zM410 231h1.2v1.2h-1.2zM410 238h1.2v1.2h-1.2zM410 245h1.2v1.2h-1.2zM410 252h1.2v1.2h-1.2zM410 259h1.2v1.2h-1.2zM410 266h1.2v1.2h-1.2zM410 273h1.2v1.2h-1.2zM410 280h1.2v1.2h-1.2zM410 287h1.2v1.2h-1.2zM431 156h1.2v1.2h-1.2zM431 163h1.2v1.2h-1.2zM431 170h1.2v1.2h-1.2zM431 177h1.2v1.2h-1.2zM431 184h1.2v1.2h-1.2zM431 191h1.2v1.2h-1.2zM431 198h1.2v1.2h-1.2zM431 205h1.2v1.2h-1.2zM431 212h1.2v1.2h-1.2zM431 219h1.2v1.2h-1.2zM431 231h1.2v1.2h-1.2zM431 238h1.2v1.2h-1.2zM431 245h1.2v1.2h-1.2zM431 252h1.2v1.2h-1.2zM431 259h1.2v1.2h-1.2zM431 266h1.2v1.2h-1.2zM431 273h1.2v1.2h-1.2zM431 280h1.2v1.2h-1.2zM431 287h1.2v1.2h-1.2zM475 156h1.2v1.2h-1.2zM475 163h1.2v1.2h-1.2zM475 170h1.2v1.2h-1.2zM475 177h1.2v1.2h-1.2zM475 184h1.2v1.2h-1.2zM475 191h1.2v1.2h-1.2zM475 198h1.2v1.2h-1.2zM475 205h1.2v1.2h-1.2zM475 212h1.2v1.2h-1.2zM475 219h1.2v1.2h-1.2zM475 231h1.2v1.2h-1.2zM475 238h1.2v1.2h-1.2zM475 245h1.2v1.2h-1.2zM475 252h1.2v1.2h-1.2zM475 259h1.2v1.2h-1.2zM475 266h1.2v1.2h-1.2zM475 273h1.2v1.2h-1.2zM475 280h1.2v1.2h-1.2zM475 287h1.2v1.2h-1.2zM497 156h1.2v1.2h-1.2zM497 163h1.2v1.2h-1.2zM497 170h1.2v1.2h-1.2zM497 177h1.2v1.2h-1.2zM497 184h1.2v1.2h-1.2zM497 191h1.2v1.2h-1.2zM497 198h1.2v1.2h-1.2zM497 205h1.2v1.2h-1.2zM497 212h1.2v1.2h-1.2zM497 219h1.2v1.2h-1.2zM497 231h1.2v1.2h-1.2zM497 238h1.2v1.2h-1.2zM497 245h1.2v1.2h-1.2zM497 252h1.2v1.2h-1.2zM497 259h1.2v1.2h-1.2zM497 266h1.2v1.2h-1.2zM497 273h1.2v1.2h-1.2zM497 280h1.2v1.2h-1.2zM497 287h1.2v1.2h-1.2zM518 156h1.2v1.2h-1.2zM518 163h1.2v1.2h-1.2zM518 170h1.2v1.2h-1.2zM518 177h1.2v1.2h-1.2zM518 184h1.2v1.2h-1.2zM518 191h1.2v1.2h-1.2zM518 198h1.2v1.2h-1.2zM518 205h1.2v1.2h-1.2zM518 212h1.2v1.2h-1.2zM518 219h1.2v1.2h-1.2zM518 231h1.2v1.2h-1.2zM518 238h1.2v1.2h-1.2zM518 245h1.2v1.2h-1.2zM518 252h1.2v1.2h-1.2zM518 259h1.2v1.2h-1.2zM518 266h1.2v1.2h-1.2zM518 273h1.2v1.2h-1.2zM518 280h1.2v1.2h-1.2zM518 287h1.2v1.2h-1.2zM540 156h1.2v1.2h-1.2zM540 163h1.2v1.2h-1.2zM540 170h1.2v1.2h-1.2zM540 177h1.2v1.2h-1.2zM540 184h1.2v1.2h-1.2zM540 191h1.2v1.2h-1.2zM540 198h1.2v1.2h-1.2zM540 205h1.2v1.2h-1.2zM540 212h1.2v1.2h-1.2zM540 219h1.2v1.2h-1.2zM540 231h1.2v1.2h-1.2zM540 238h1.2v1.2h-1.2zM540 245h1.2v1.2h-1.2zM540 252h1.2v1.2h-1.2zM540 259h1.2v1.2h-1.2zM540 266h1.2v1.2h-1.2zM540 273h1.2v1.2h-1.2zM540 280h1.2v1.2h-1.2zM540 287h1.2v1.2h-1.2zM584 156h1.2v1.2h-1.2zM584 163h1.2v1.2h-1.2zM584 170h1.2v1.2h-1.2zM584 177h1.2v1.2h-1.2zM584 184h1.2v1.2h-1.2zM584 191h1.2v1.2h-1.2zM584 198h1.2v1.2h-1.2zM584 205h1.2v1.2h-1.2zM584 212h1.2v1.2h-1.2zM584 219h1.2v1.2h-1.2zM584 231h1.2v1.2h-1.2zM584 238h1.2v1.2h-1.2zM584 245h1.2v1.2h-1.2zM584 252h1.2v1.2h-1.2zM584 259h1.2v1.2h-1.2zM584 266h1.2v1.2h-1.2zM584 273h1.2v1.2h-1.2zM584 280h1.2v1.2h-1.2zM584 287h1.2v1.2h-1.2zM605 156h1.2v1.2h-1.2zM605 163h1.2v1.2h-1.2zM605 170h1.2v1.2h-1.2zM605 177h1.2v1.2h-1.2zM605 184h1.2v1.2h-1.2zM605 191h1.2v1.2h-1.2zM605 198h1.2v1.2h-1.2zM605 205h1.2v1.2h-1.2zM605 212h1.2v1.2h-1.2zM605 219h1.2v1.2h-1.2zM605 231h1.2v1.2h-1.2zM605 238h1.2v1.2h-1.2zM605 245h1.2v1.2h-1.2zM605 252h1.2v1.2h-1.2zM605 259h1.2v1.2h-1.2zM605 266h1.2v1.2h-1.2zM605 273h1.2v1.2h-1.2zM605 280h1.2v1.2h-1.2zM605 287h1.2v1.2h-1.2zM627 156h1.2v1.2h-1.2zM627 163h1.2v1.2h-1.2zM627 170h1.2v1.2h-1.2zM627 177h1.2v1.2h-1.2zM627 184h1.2v1.2h-1.2zM627 191h1.2v1.2h-1.2zM627 198h1.2v1.2h-1.2zM627 205h1.2v1.2h-1.2zM627 212h1.2v1.2h-1.2zM627 219h1.2v1.2h-1.2zM627 231h1.2v1.2h-1.2zM627 238h1.2v1.2h-1.2zM627 245h1.2v1.2h-1.2zM627 252h1.2v1.2h-1.2zM627 259h1.2v1.2h-1.2zM627 266h1.2v1.2h-1.2zM627 273h1.2v1.2h-1.2zM627 280h1.2v1.2h-1.2zM627 287h1.2v1.2h-1.2zM649 156h1.2v1.2h-1.2zM649 163h1.2v1.2h-1.2zM649 170h1.2v1.2h-1.2zM649 177h1.2v1.2h-1.2zM649 184h1.2v1.2h-1.2zM649 191h1.2v1.2h-1.2zM649 198h1.2v1.2h-1.2zM649 205h1.2v1.2h-1.2zM649 212h1.2v1.2h-1.2zM649 219h1.2v1.2h-1.2zM649 231h1.2v1.2h-1.2zM649 238h1.2v1.2h-1.2zM649 245h1.2v1.2h-1.2zM649 252h1.2v1.2h-1.2zM649 259h1.2v1.2h-1.2zM649 266h1.2v1.2h-1.2zM649 273h1.2v1.2h-1.2zM649 280h1.2v1.2h-1.2zM649 287h1.2v1.2h-1.2zM692 156h1.2v1.2h-1.2zM692 163h1.2v1.2h-1.2zM692 170h1.2v1.2h-1.2zM692 177h1.2v1.2h-1.2zM692 184h1.2v1.2h-1.2zM692 191h1.2v1.2h-1.2zM692 198h1.2v1.2h-1.2zM692 205h1.2v1.2h-1.2zM692 212h1.2v1.2h-1.2zM692 219h1.2v1.2h-1.2zM692 231h1.2v1.2h-1.2zM692 238h1.2v1.2h-1.2zM692 245h1.2v1.2h-1.2zM692 252h1.2v1.2h-1.2zM692 259h1.2v1.2h-1.2zM692 266h1.2v1.2h-1.2zM692 273h1.2v1.2h-1.2zM692 280h1.2v1.2h-1.2zM692 287h1.2v1.2h-1.2zM714 156h1.2v1.2h-1.2zM714 163h1.2v1.2h-1.2zM714 170h1.2v1.2h-1.2zM714 177h1.2v1.2h-1.2zM714 184h1.2v1.2h-1.2zM714 191h1.2v1.2h-1.2zM714 198h1.2v1.2h-1.2zM714 205h1.2v1.2h-1.2zM714 212h1.2v1.2h-1.2zM714 219h1.2v1.2h-1.2zM714 231h1.2v1.2h-1.2zM714 238h1.2v1.2h-1.2zM714 245h1.2v1.2h-1.2zM714 252h1.2v1.2h-1.2zM714 259h1.2v1.2h-1.2zM714 266h1.2v1.2h-1.2zM714 273h1.2v1.2h-1.2zM714 280h1.2v1.2h-1.2zM714 287h1.2v1.2h-1.2zM736 156h1.2v1.2h-1.2zM736 163h1.2v1.2h-1.2zM736 170h1.2v1.2h-1.2zM736 177h1.2v1.2h-1.2zM736 184h1.2v1.2h-1.2zM736 191h1.2v1.2h-1.2zM736 198h1.2v1.2h-1.2zM736 205h1.2v1.2h-1.2zM736 212h1.2v1.2h-1.2zM736 219h1.2v1.2h-1.2zM736 231h1.2v1.2h-1.2zM736 238h1.2v1.2h-1.2zM736 245h1.2v1.2h-1.2zM736 252h1.2v1.2h-1.2zM736 259h1.2v1.2h-1.2zM736 266h1.2v1.2h-1.2zM736 273h1.2v1.2h-1.2zM736 280h1.2v1.2h-1.2zM736 287h1.2v1.2h-1.2zM758 156h1.2v1.2h-1.2zM758 163h1.2v1.2h-1.2zM758 170h1.2v1.2h-1.2zM758 177h1.2v1.2h-1.2zM758 184h1.2v1.2h-1.2zM758 191h1.2v1.2h-1.2zM758 198h1.2v1.2h-1.2zM758 205h1.2v1.2h-1.2zM758 212h1.2v1.2h-1.2zM758 219h1.2v1.2h-1.2zM758 231h1.2v1.2h-1.2zM758 238h1.2v1.2h-1.2zM758 245h1.2v1.2h-1.2zM758 252h1.2v1.2h-1.2zM758 259h1.2v1.2h-1.2zM758 266h1.2v1.2h-1.2zM758 273h1.2v1.2h-1.2zM758 280h1.2v1.2h-1.2zM758 287h1.2v1.2h-1.2zM801 156h1.2v1.2h-1.2zM801 163h1.2v1.2h-1.2zM801 170h1.2v1.2h-1.2zM801 177h1.2v1.2h-1.2zM801 184h1.2v1.2h-1.2zM801 191h1.2v1.2h-1.2zM801 198h1.2v1.2h-1.2zM801 205h1.2v1.2h-1.2zM801 212h1.2v1.2h-1.2zM801 219h1.2v1.2h-1.2zM801 231h1.2v1.2h-1.2zM801 238h1.2v1.2h-1.2zM801 245h1.2v1.2h-1.2zM801 252h1.2v1.2h-1.2zM801 259h1.2v1.2h-1.2zM801 266h1.2v1.2h-1.2zM801 273h1.2v1.2h-1.2zM801 280h1.2v1.2h-1.2zM801 287h1.2v1.2h-1.2zM823 156h1.2v1.2h-1.2zM823 163h1.2v1.2h-1.2zM823 170h1.2v1.2h-1.2zM823 177h1.2v1.2h-1.2zM823 184h1.2v1.2h-1.2zM823 191h1.2v1.2h-1.2zM823 198h1.2v1.2h-1.2zM823 205h1.2v1.2h-1.2zM823 212h1.2v1.2h-1.2zM823 219h1.2v1.2h-1.2zM823 231h1.2v1.2h-1.2zM823 238h1.2v1.2h-1.2zM823 245h1.2v1.2h-1.2zM823 252h1.2v1.2h-1.2zM823 259h1.2v1.2h-1.2zM823 266h1.2v1.2h-1.2zM823 273h1.2v1.2h-1.2zM823 280h1.2v1.2h-1.2zM823 287h1.2v1.2h-1.2zM845 156h1.2v1.2h-1.2zM845 163h1.2v1.2h-1.2zM845 170h1.2v1.2h-1.2zM845 177h1.2v1.2h-1.2zM845 184h1.2v1.2h-1.2zM845 191h1.2v1.2h-1.2zM845 198h1.2v1.2h-1.2zM845 205h1.2v1.2h-1.2zM845 212h1.2v1.2h-1.2zM845 219h1.2v1.2h-1.2zM845 231h1.2v1.2h-1.2zM845 238h1.2v1.2h-1.2zM845 245h1.2v1.2h-1.2zM845 252h1.2v1.2h-1.2zM845 259h1.2v1.2h-1.2zM845 266h1.2v1.2h-1.2zM845 273h1.2v1.2h-1.2zM845 280h1.2v1.2h-1.2zM845 287h1.2v1.2h-1.2zM866 156h1.2v1.2h-1.2zM866 163h1.2v1.2h-1.2zM866 170h1.2v1.2h-1.2zM866 177h1.2v1.2h-1.2zM866 184h1.2v1.2h-1.2zM866 191h1.2v1.2h-1.2zM866 198h1.2v1.2h-1.2zM866 205h1.2v1.2h-1.2zM866 212h1.2v1.2h-1.2zM866 219h1.2v1.2h-1.2zM866 231h1.2v1.2h-1.2zM866 238h1.2v1.2h-1.2zM866 245h1.2v1.2h-1.2zM866 252h1.2v1.2h-1.2zM866 259h1.2v1.2h-1.2zM866 266h1.2v1.2h-1.2zM866 273h1.2v1.2h-1.2zM866 280h1.2v1.2h-1.2zM866 287h1.2v1.2h-1.2zM910 156h1.2v1.2h-1.2zM910 163h1.2v1.2h-1.2zM910 170h1.2v1.2h-1.2zM910 177h1.2v1.2h-1.2zM910 184h1.2v1.2h-1.2zM910 191h1.2v1.2h-1.2zM910 198h1.2v1.2h-1.2zM910 205h1.2v1.2h-1.2zM910 212h1.2v1.2h-1.2zM910 219h1.2v1.2h-1.2zM910 231h1.2v1.2h-1.2zM910 238h1.2v1.2h-1.2zM910 245h1.2v1.2h-1.2zM910 252h1.2v1.2h-1.2zM910 259h1.2v1.2h-1.2zM910 266h1.2v1.2h-1.2zM910 273h1.2v1.2h-1.2zM910 280h1.2v1.2h-1.2zM910 287h1.2v1.2h-1.2zM931 156h1.2v1.2h-1.2zM931 163h1.2v1.2h-1.2zM931 170h1.2v1.2h-1.2zM931 177h1.2v1.2h-1.2zM931 184h1.2v1.2h-1.2zM931 191h1.2v1.2h-1.2zM931 198h1.2v1.2h-1.2zM931 205h1.2v1.2h-1.2zM931 212h1.2v1.2h-1.2zM931 219h1.2v1.2h-1.2zM931 231h1.2v1.2h-1.2zM931 238h1.2v1.2h-1.2zM931 245h1.2v1.2h-1.2zM931 252h1.2v1.2h-1.2zM931 259h1.2v1.2h-1.2zM931 266h1.2v1.2h-1.2zM931 273h1.2v1.2h-1.2zM931 280h1.2v1.2h-1.2zM931 287h1.2v1.2h-1.2zM953 156h1.2v1.2h-1.2zM953 163h1.2v1.2h-1.2zM953 170h1.2v1.2h-1.2zM953 177h1.2v1.2h-1.2zM953 184h1.2v1.2h-1.2zM953 191h1.2v1.2h-1.2zM953 198h1.2v1.2h-1.2zM953 205h1.2v1.2h-1.2zM953 212h1.2v1.2h-1.2zM953 219h1.2v1.2h-1.2zM953 231h1.2v1.2h-1.2zM953 238h1.2v1.2h-1.2zM953 245h1.2v1.2h-1.2zM953 252h1.2v1.2h-1.2zM953 259h1.2v1.2h-1.2zM953 266h1.2v1.2h-1.2zM953 273h1.2v1.2h-1.2zM953 280h1.2v1.2h-1.2zM953 287h1.2v1.2h-1.2zM975 156h1.2v1.2h-1.2zM975 163h1.2v1.2h-1.2zM975 170h1.2v1.2h-1.2zM975 177h1.2v1.2h-1.2zM975 184h1.2v1.2h-1.2zM975 191h1.2v1.2h-1.2zM975 198h1.2v1.2h-1.2zM975 205h1.2v1.2h-1.2zM975 212h1.2v1.2h-1.2zM975 219h1.2v1.2h-1.2zM975 231h1.2v1.2h-1.2zM975 238h1.2v1.2h-1.2zM975 245h1.2v1.2h-1.2zM975 252h1.2v1.2h-1.2zM975 259h1.2v1.2h-1.2zM975 266h1.2v1.2h-1.2zM975 273h1.2v1.2h-1.2zM975 280h1.2v1.2h-1.2zM975 287h1.2v1.2h-1.2zM1018 156h1.2v1.2h-1.2zM1018 163h1.2v1.2h-1.2zM1018 170h1.2v1.2h-1.2zM1018 177h1.2v1.2h-1.2zM1018 184h1.2v1.2h-1.2zM1018 191h1.2v1.2h-1.2zM1018 198h1.2v1.2h-1.2zM1018 205h1.2v1.2h-1.2zM1018 212h1.2v1.2h-1.2zM1018 219h1.2v1.2h-1.2zM1018 231h1.2v1.2h-1.2zM1018 238h1.2v1.2h-1.2zM1018 245h1.2v1.2h-1.2zM1018 252h1.2v1.2h-1.2zM1018 259h1.2v1.2h-1.2zM1018 266h1.2v1.2h-1.2zM1018 273h1.2v1.2h-1.2zM1018 280h1.2v1.2h-1.2zM1018 287h1.2v1.2h-1.2zM1040 156h1.2v1.2h-1.2zM1040 163h1.2v1.2h-1.2zM1040 170h1.2v1.2h-1.2zM1040 177h1.2v1.2h-1.2zM1040 184h1.2v1.2h-1.2zM1040 191h1.2v1.2h-1.2zM1040 198h1.2v1.2h-1.2zM1040 205h1.2v1.2h-1.2zM1040 212h1.2v1.2h-1.2zM1040 219h1.2v1.2h-1.2zM1040 231h1.2v1.2h-1.2zM1040 238h1.2v1.2h-1.2zM1040 245h1.2v1.2h-1.2zM1040 252h1.2v1.2h-1.2zM1040 259h1.2v1.2h-1.2zM1040 266h1.2v1.2h-1.2zM1040 273h1.2v1.2h-1.2zM1040 280h1.2v1.2h-1.2zM1040 287h1.2v1.2h-1.2zM1062 156h1.2v1.2h-1.2zM1062 163h1.2v1.2h-1.2zM1062 170h1.2v1.2h-1.2zM1062 177h1.2v1.2h-1.2zM1062 184h1.2v1.2h-1.2zM1062 191h1.2v1.2h-1.2zM1062 198h1.2v1.2h-1.2zM1062 205h1.2v1.2h-1.2zM1062 212h1.2v1.2h-1.2zM1062 219h1.2v1.2h-1.2zM1062 231h1.2v1.2h-1.2zM1062 238h1.2v1.2h-1.2zM1062 245h1.2v1.2h-1.2zM1062 252h1.2v1.2h-1.2zM1062 259h1.2v1.2h-1.2zM1062 266h1.2v1.2h-1.2zM1062 273h1.2v1.2h-1.2zM1062 280h1.2v1.2h-1.2zM1062 287h1.2v1.2h-1.2zM1084 156h1.2v1.2h-1.2zM1084 163h1.2v1.2h-1.2zM1084 170h1.2v1.2h-1.2zM1084 177h1.2v1.2h-1.2zM1084 184h1.2v1.2h-1.2zM1084 191h1.2v1.2h-1.2zM1084 198h1.2v1.2h-1.2zM1084 205h1.2v1.2h-1.2zM1084 212h1.2v1.2h-1.2zM1084 219h1.2v1.2h-1.2zM1084 231h1.2v1.2h-1.2zM1084 238h1.2v1.2h-1.2zM1084 245h1.2v1.2h-1.2zM1084 252h1.2v1.2h-1.2zM1084 259h1.2v1.2h-1.2zM1084 266h1.2v1.2h-1.2zM1084 273h1.2v1.2h-1.2zM1084 280h1.2v1.2h-1.2zM1084 287h1.2v1.2h-1.2z" fill="#b9b9b9"/><rect x="4" y="223.2" width="1087" height="2" fill="#7a7a7a"/><rect x="4" y="295.2" width="1087" height="2" fill="#7a7a7a"/><path d="M4 212.6H1091" stroke="#bdbdbd" stroke-width="1.2" stroke-dasharray="5 5" fill="none"/><path d="M4 266.6H1091" stroke="#bdbdbd" stroke-width="1.2" stroke-dasharray="5 5" fill="none"/><path d="M4 211.3 H3.4 H3.4 V197.08 H4.4 V186.02 H5.4 V181.91 H6.5 V179.7 H11 V214.7 V211.3 H16.8 H16.8 V207.51 H17.8 V188.55 H18.8 V181.91 H19.9 V179.7 H24.4 V215.06 V211.3 H33.6 H33.6 V208.14 H34.6 V186.65 H35.6 V181.91 H36.7 V179.7 H40.5 V214.08 V211.3 H46.9 H46.9 V208.14 H47.9 V186.02 H48.9 V181.91 H50 V179.7 H54.5 V215.73 V211.3 H60.4 H60.4 V195.5 H61.4 V186.02 H62.4 V182.86 H63.5 V179.7 H68 V215.05 V211.3 H74.4 H74.4 V208.14 H75.4 V188.55 H76.4 V182.86 H77.5 V179.7 H82 V214.18 V211.3 h1.2 v-0.8 h1 v0.8 H88.1 H88.1 V208.14 H89.1 V186.65 H90.1 V181.91 H91.2 V179.7 H95.7 V214.68 V211.3 H101.6 H101.6 V195.5 H102.6 V188.55 H103.6 V181.91 H104.7 V179.7 H109.2 V214.8 V211.3 H115.4 H115.4 V197.08 H116.4 V186.02 H117.4 V181.91 H118.5 V179.7 H123 V214.61 V211.3 H128.6 H128.6 V208.14 H129.6 V186.02 H130.6 V181.91 H131.7 V179.7 H136.2 V214.43 V211.3 h1.2 v-0.8 h1 v0.8 H142.4 H142.4 V201.82 H143.4 V188.55 H144.4 V182.86 H145.5 V179.7 H150 V214.93 V211.3 h1.2 v-0.8 h1 v0.8 H157.4 H157.4 V208.14 H158.4 V186.65 H159.4 V181.91 H160.5 V179.7 H165 V213.93 V211.3 h1.2 v-0.8 h1 v0.8 H171.1 H171.1 V208.14 H172.1 V188.55 H173.1 V182.86 H174.2 V179.7 H178.7 V215.65 V211.3 h1.2 v-0.8 h1 v0.8 H184.9 H184.9 V197.08 H185.9 V186.02 H186.9 V181.91 H188 V179.7 H192.5 V214.64 V211.3 H198.6 H198.6 V207.51 H199.6 V186.02 H200.6 V181.91 H201.7 V179.7 H206.2 V214.47 V211.3 h1.2 v-0.8 h1 v0.8 H212.4 H212.4 V208.14 H213.4 V186.65 H214.4 V182.86 H215.5 V179.7 H220 V214.07 V211.3 H226.6 H226.6 V208.14 H227.6 V188.55 H228.6 V181.91 H229.7 V179.7 H234.2 V215.39 V211.3 h1.2 v-0.8 h1 v0.8 H239.9 H239.9 V195.5 H240.9 V188.55 H241.9 V181.91 H243 V179.7 H247.5 V214.82 V211.3 H253.6 H253.6 V207.51 H254.6 V186.65 H255.6 V181.91 H256.7 V179.7 H261.2 V214.03 V211.3 h1.2 v-0.8 h1 v0.8 H267.4 H267.4 V207.51 H268.4 V188.55 H269.4 V181.91 H270.5 V179.7 H275 V215.53 V211.3 H281.1 H281.1 V195.5 H282.1 V186.65 H283.1 V182.86 H284.2 V179.7 H288.7 V214.22 V211.3 h1.2 v-0.8 h1 v0.8 H295.9 H295.9 V195.5 H296.9 V186.02 H297.9 V182.86 H299 V179.7 H303.5 V213.88 V211.3 h1.2 v-0.8 h1 v0.8 H309.9 H309.9 V197.08 H310.9 V186.65 H311.9 V182.86 H313 V179.7 H317.5 V215.35 V211.3 h1.2 v-0.8 h1 v0.8 H323.6 H323.6 V201.82 H324.6 V186.65 H325.6 V182.86 H326.7 V179.7 H331.2 V213.95 V211.3 h1.2 v-0.8 h1 v0.8 H336.9 H336.9 V207.51 H337.9 V188.55 H338.9 V181.91 H340 V179.7 H344.5 V214.54 V211.3 h1.2 v-0.8 h1 v0.8 H350.6 H350.6 V195.5 H351.6 V186.65 H352.6 V182.86 H353.7 V179.7 H358.2 V215.53 V211.3 h1.2 v-0.8 h1 v0.8 H364.1 H364.1 V207.51 H365.1 V186.65 H366.1 V182.86 H367.2 V179.7 H371.7 V215.44 V211.3 h1.2 v-0.8 h1 v0.8 H377.9 H377.9 V207.51 H378.9 V188.55 H379.9 V182.86 H381 V179.7 H385.5 V215.17 V211.3 h1.2 v-0.8 h1 v0.8 H391.9 H391.9 V197.08 H392.9 V186.02 H393.9 V182.86 H395 V179.7 H399.5 V214.64 V211.3 h1.2 v-0.8 h1 v0.8 H408 H408 V208.14 H409 V186.02 H410 V181.91 H411.1 V179.7 H416.43 V180.4 H420.97 V180 H426.92 V180 H430.97 V179.7 H434.73 V180.4 H441.09 V180 H447.77 V180.1 H452.05 V179.7 H459.54 V179.7 H464.15 V180.4 H468.65 V179.7 H472.71 V180.1 H478.89 V179.7 H482.45 V179.7 H490.79 V180.1 H497.73 V180 H504.24 V179.7 H510.78 V179.7 H516.63 V180.1 H523.83 V179.7 H526.96 V179.7 H532.85 V180.1 H537.77 V179.7 H541.22 V180 H546.43 V179.7 H552.5 V179.7 V179.7 H553.5 V215.39 V211.3 H558.6 H558.6 V201.82 H559.6 V188.55 H560.6 V181.91 H561.7 V179.7 H566.2 V215.6 V211.3 H572.4 H572.4 V197.08 H573.4 V188.55 H574.4 V181.91 H575.5 V179.7 H580 V214.95 V211.3 H586.3 H586.3 V197.08 H587.3 V186.65 H588.3 V182.86 H589.4 V179.7 H593.9 V215.02 V211.3 h1.2 v-0.8 h1 v0.8 H599.9 H599.9 V208.14 H600.9 V186.65 H601.9 V181.91 H603 V179.7 H607.5 V215.26 V211.3 h1.2 v-0.8 h1 v0.8 H613.6 H613.6 V195.5 H614.6 V186.65 H615.6 V181.91 H616.7 V179.7 H621.2 V214.73 V211.3 H626.9 H626.9 V195.5 H627.9 V186.02 H628.9 V182.86 H630 V179.7 H634.5 V214.42 V211.3 h1.2 v-0.8 h1 v0.8 H640.6 H640.6 V208.14 H641.6 V188.55 H642.6 V182.86 H643.7 V179.7 H648.2 V214.79 V211.3 H654.4 H654.4 V197.08 H655.4 V186.65 H656.4 V182.86 H657.5 V179.7 H662 V214.54 V211.3 h1.2 v-0.8 h1 v0.8 H668.1 H668.1 V195.5 H669.1 V188.55 H670.1 V182.86 H671.2 V179.7 H675.7 V215.31 V211.3 h1.2 v-0.8 h1 v0.8 H683.6 H683.6 V197.08 H684.6 V186.65 H685.6 V182.86 H686.7 V179.7 H691.2 V214.45 V211.3 H697.4 H697.4 V207.51 H698.4 V186.02 H699.4 V181.91 H700.5 V179.7 H705 V215.41 V211.3 H710.6 H710.6 V207.51 H711.6 V188.55 H712.6 V181.91 H713.7 V179.7 H718.2 V214.24 V211.3 H724.4 H724.4 V207.51 H725.4 V188.55 H726.4 V182.86 H727.5 V179.7 H732 V214.79 V211.3 H738.1 H738.1 V208.14 H739.1 V186.02 H740.1 V182.86 H741.2 V179.7 H745.7 V215.7 V211.3 h1.2 v-0.8 h1 v0.8 H751.9 H751.9 V207.51 H752.9 V188.55 H753.9 V181.91 H755 V179.7 H759.5 V214.74 V211.3 H765.6 H765.6 V197.08 H766.6 V186.65 H767.6 V181.91 H768.7 V179.7 H773.2 V215.14 V211.3 H779.4 H779.4 V195.5 H780.4 V186.65 H781.4 V181.91 H782.5 V179.7 H787 V213.95 V211.3 h1.2 v-0.8 h1 v0.8 H793.1 H793.1 V195.5 H794.1 V188.55 H795.1 V181.91 H796.2 V179.7 H800.7 V214.94 V211.3 h1.2 v-0.8 h1 v0.8 H806.5 H806.5 V195.5 H807.5 V188.55 H808.5 V182.86 H809.6 V179.7 H820.5 V214.61 V211.3 h1.2 v-0.8 h1 v0.8 H826.3 H826.3 V201.82 H827.3 V188.55 H828.3 V182.86 H829.4 V179.7 H833.9 V215.39 V211.3 H839.9 H839.9 V208.14 H840.9 V186.65 H841.9 V182.86 H843 V179.7 H847.5 V215.06 V211.3 H853.6 H853.6 V201.82 H854.6 V188.55 H855.6 V182.86 H856.7 V179.7 H861.2 V214.2 V211.3 h1.2 v-0.8 h1 v0.8 H866.9 H866.9 V207.51 H867.9 V186.02 H868.9 V182.86 H870 V179.7 H874.5 V215.31 V211.3 H880.6 H880.6 V208.14 H881.6 V188.55 H882.6 V182.86 H883.7 V179.7 H888.2 V214.34 V211.3 h1.2 v-0.8 h1 v0.8 H894.4 H894.4 V195.5 H895.4 V186.02 H896.4 V182.86 H897.5 V179.7 H902 V214.59 V211.3 H908.1 H908.1 V207.51 H909.1 V188.55 H910.1 V181.91 H911.2 V179.7 H915.7 V215.67 V211.3 H921.9 H921.9 V207.51 H922.9 V186.65 H923.9 V181.91 H925 V179.7 H929.5 V214.19 V211.3 H935.6 H935.6 V208.14 H936.6 V186.65 H937.6 V181.91 H938.7 V179.7 H943.2 V214.73 V211.3 H951.9 H951.9 V207.51 H952.9 V188.55 H953.9 V182.86 H955 V179.7 H959.5 V214.23 V211.3 H965.6 H965.6 V208.14 H966.6 V186.65 H967.6 V181.91 H968.7 V179.7 H973.2 V214.32 V211.3 H979.4 H979.4 V208.14 H980.4 V186.65 H981.4 V182.86 H982.5 V179.7 H987 V213.87 V211.3 h1.2 v-0.8 h1 v0.8 H992.7 H992.7 V197.08 H993.7 V186.65 H994.7 V181.91 H995.8 V179.7 H1000.3 V215.64 V211.3 h1.2 v-0.8 h1 v0.8 H1006.1 H1006.1 V208.14 H1007.1 V186.65 H1008.1 V182.86 H1009.2 V179.7 H1013.7 V214.15 V211.3 h1.2 v-0.8 h1 v0.8 H1019.9 H1019.9 V207.51 H1020.9 V186.65 H1021.9 V182.86 H1023 V179.7 H1027.5 V215.8 V211.3 H1033.6 H1033.6 V195.5 H1034.6 V186.02 H1035.6 V181.91 H1036.7 V179.7 H1041.2 V215.69 V211.3 h1.2 v-0.8 h1 v0.8 H1047.4 H1047.4 V208.14 H1048.4 V188.55 H1049.4 V181.91 H1050.5 V179.7 H1055 V214.85 V211.3 h1.2 v-0.8 h1 v0.8 H1061.1 H1061.1 V195.5 H1062.1 V186.02 H1063.1 V182.86 H1064.2 V179.7 H1068.7 V214.85 V211.3 H1076.1 H1076.1 V195.5 H1077.1 V186.65 H1078.1 V181.91 H1079.2 V179.7 H1083.7 V215.14 V211.3 H1091" stroke="#f2e60c" stroke-width="1.25" fill="none" stroke-linejoin="miter"/><path d="M4 265.7 H12.5 V266 V265.1 H14.3 V261.93 H15 V251.57 H15.7 V243.09 H16.4 V237.44 H17.1 V233.36 H18.1 V234.3 H25.17 V234.3 H28.5 V234 V234.6 H30.5 V267.75 V266.1 H41.98 V264.9 H51.8 V266 H56.85 V264.9 H62.1 V265.7 H71.74 V264.9 H81.64 V266 H87.73 V265.7 H98.95 V265.7 H109.5 V264.9 V265.1 H111.3 V261.93 H112 V251.57 H112.7 V243.09 H113.4 V237.44 H114.1 V233.36 H115.1 V234.3 H123.81 V235.1 H129.96 V235.1 H137.91 V234.8 H145.38 V235.1 H153.5 V234.3 V234.6 H155.5 V267.58 V266.1 H165.7 V265.2 V265.1 H167.5 V261.93 H168.2 V251.57 H168.9 V243.09 H169.6 V237.44 H170.3 V233.36 H171.3 V234.3 H177.74 V234.3 H182.02 V234.3 H187.84 V235.3 H193.5 V235.3 V234.6 H195.5 V267.91 V266.1 H208.08 V265.7 H217.57 V266 H220.7 V266 V265.1 H222.5 V261.93 H223.2 V251.57 H223.9 V243.09 H224.6 V237.44 H225.3 V233.36 H226.3 V234.3 H236.69 V235.3 H242.27 V234 H248.5 V234.3 V234.6 H250.5 V267.95 V266.1 H260.7 V266 V265.1 H262.5 V261.93 H263.2 V251.57 H263.9 V243.09 H264.6 V237.44 H265.3 V233.36 H266.3 V234.3 H276.63 V234 H282.26 V235.3 H290.53 V234.3 V234.6 H293 V268.26 V266.1 H304.5 V266 V265.1 H306.3 V261.93 H307 V251.57 H307.7 V243.09 H308.4 V237.44 H309.1 V233.36 H310.1 V234.3 H320.19 V234.3 H326.05 V235.3 H335.08 V234.8 H346 V234.8 V234.6 H348 V268.41 V266.1 H359 V265.7 V265.1 H360.8 V261.93 H361.5 V251.57 H362.2 V243.09 H362.9 V237.44 H363.6 V233.36 H364.6 V234.3 H371.75 V234.3 H382.85 V234.3 H393.96 V234.3 H403.5 V234.8 V234.6 H405.5 V267.98 V266.1 H414 V264.9 V265.1 H415.8 V261.93 H416.5 V251.57 H417.2 V243.09 H417.9 V237.44 H418.6 V233.36 H419.6 V234.3 H429.35 V235.3 H434.35 V235.1 H443.38 V234.3 H448.15 V234 H457.61 V234.8 H462.53 V234 H471.61 V234.8 H479.63 V235.3 H490.29 V234.3 H498.15 V234.3 H502.45 V234 H511.36 V234 H519.21 V234.3 H524.68 V234.3 H530.06 V234.3 H541.98 V235.3 H544.2 V234.3 V234.6 H546.2 V267.47 V266.1 H554 V265.7 V265.1 H555.8 V261.93 H556.5 V251.57 H557.2 V243.09 H557.9 V237.44 H558.6 V233.36 H559.6 V234.3 H571.12 V234.8 H578.24 V235.1 H586.37 V235.1 H592.05 V234.8 H596.15 V235.3 H600.48 V234.3 H605.93 V235.1 H609.7 V234.8 V234.6 H611.7 V268.01 V266.1 H620.46 V265.7 H626.31 V265.7 H634.22 V265.7 V265.1 H637.5 V261.93 H638.2 V251.57 H638.9 V243.09 H639.6 V237.44 H640.3 V233.36 H641.3 V234.3 H649.2 V235.3 V234.6 H651.2 V268.95 V266.1 H663.2 V264.9 V265.1 H665 V261.93 H665.7 V251.57 H666.4 V243.09 H667.1 V237.44 H667.8 V233.36 H668.8 V234.3 H678.76 V234.3 V234.6 H681.2 V268.21 V266.1 H692.5 V265.2 V265.1 H694.3 V261.93 H695 V251.57 H695.7 V243.09 H696.4 V237.44 H697.1 V233.36 H698.1 V234.3 H705.74 V234.3 V234.6 H708.7 V268.69 V266.1 H719.5 V264.9 V265.1 H721.3 V261.93 H722 V251.57 H722.7 V243.09 H723.4 V237.44 H724.1 V233.36 H725.1 V234.3 H731.57 V234.8 V234.6 H735.5 V268.96 V266.1 H748.75 V264.9 H760 V264.9 V265.1 H761.8 V261.93 H762.5 V251.57 H763.2 V243.09 H763.9 V237.44 H764.6 V233.36 H765.6 V234.3 H772.65 V234.3 V234.6 H776.2 V267.34 V266.1 H786.28 V264.9 V265.1 H789.3 V261.93 H790 V251.57 H790.7 V243.09 H791.4 V237.44 H792.1 V233.36 H793.1 V234.3 H799.31 V234.8 H811.23 V234 V234.6 H813.7 V267.3 V266.1 H821.2 V265.2 V265.1 H823 V261.93 H823.7 V251.57 H824.4 V243.09 H825.1 V237.44 H825.8 V233.36 H826.8 V234.3 H834.9 V235.3 H842.15 V234.3 H850.42 V235.1 H858.53 V235.1 H867.67 V235.3 H872.63 V235.1 H876.7 V234.3 V234.6 H878.7 V267.43 V266.1 H886.67 V265.7 H893.98 V264.9 H902.5 V265.7 V265.1 H904.3 V261.93 H905 V251.57 H905.7 V243.09 H906.4 V237.44 H907.1 V233.36 H908.1 V234.3 H918.68 V234.3 H923.47 V234.8 H929.68 V234.8 H938.08 V234 H945.4 V234 V234.6 H948.7 V268.34 V266.1 H959.5 V264.9 V265.1 H961.3 V261.93 H962 V251.57 H962.7 V243.09 H963.4 V237.44 H964.1 V233.36 H965.1 V234.3 H976.98 V234.3 H985.37 V235.3 H995.45 V234.3 H1001.7 V234.3 V234.6 H1003.7 V267.97 V266.1 H1014 V264.9 V265.1 H1015.8 V261.93 H1016.5 V251.57 H1017.2 V243.09 H1017.9 V237.44 H1018.6 V233.36 H1019.6 V234.3 H1029.34 V234 H1033.8 V235.1 H1041.17 V234 H1048.36 V234.8 H1055.28 V234.8 H1063.15 V234.8 H1071.63 V234.8 H1080.94 V235.3 H1085.5 V234.3 V234.6 H1087.5 V268.74 V266.1 H1091" stroke="#1fb9c6" stroke-width="1.25" fill="none"/><rect x="391" y="328.9" width="170" height="4" fill="#ff00ff"/><rect x="806" y="328.9" width="22" height="4" fill="#ff00ff"/><path d="M396 333.5H560 M812 333.5H828" stroke="#c8c8c8" stroke-width="1.2" stroke-dasharray="5 5" fill="none"/><g clip-path="url(#cm)"><path d="M-20 331.05 L-15.6 320.95 H138.6 L143 331.05 L138.6 341.15 H-15.6 Z" fill="#000" stroke="#9c9600" stroke-width="2.0" stroke-linejoin="round"/><path d="M143 331.05 L147.4 320.95 H154.6 L159 331.05 L154.6 341.15 H147.4 Z" fill="#000" stroke="#d10000" stroke-width="1.4" stroke-linejoin="round"/><path d="M159 331.05 L163.4 320.95 H262.6 L267 331.05 L262.6 341.15 H163.4 Z" fill="#000" stroke="#009a9e" stroke-width="2.0" stroke-linejoin="round"/><path d="M267 331.05 L271.4 320.95 H279.6 L284 331.05 L279.6 341.15 H271.4 Z" fill="#000" stroke="#d10000" stroke-width="1.4" stroke-linejoin="round"/><path d="M284 331.05 L288.4 320.95 H387.3 L391.7 331.05 L387.3 341.15 H288.4 Z" fill="#000" stroke="#009a9e" stroke-width="2.0" stroke-linejoin="round"/><path d="M560 331.05 L564.4 320.95 H789.3 L793.7 331.05 L789.3 341.15 H564.4 Z" fill="#000" stroke="#9c9600" stroke-width="2.0" stroke-linejoin="round"/><path d="M793.7 331.05 L798.1 320.95 H802.6 L807 331.05 L802.6 341.15 H798.1 Z" fill="#000" stroke="#d10000" stroke-width="1.4" stroke-linejoin="round"/><path d="M827.3 331.05 L831.7 320.95 H931.8 L936.2 331.05 L931.8 341.15 H831.7 Z" fill="#000" stroke="#9c9600" stroke-width="2.0" stroke-linejoin="round"/><path d="M936.2 331.05 L940.6 320.95 H947.6 L952 331.05 L947.6 341.15 H940.6 Z" fill="#000" stroke="#d10000" stroke-width="1.4" stroke-linejoin="round"/><path d="M952 331.05 L956.4 320.95 H1056.8 L1061.2 331.05 L1056.8 341.15 H956.4 Z" fill="#000" stroke="#009a9e" stroke-width="2.0" stroke-linejoin="round"/><path d="M1061.2 331.05 L1065.6 320.95 H1072.6 L1077 331.05 L1072.6 341.15 H1065.6 Z" fill="#000" stroke="#d10000" stroke-width="1.4" stroke-linejoin="round"/><path d="M1077 331.05 L1081.4 320.95 H1175.6 L1180 331.05 L1175.6 341.15 H1081.4 Z" fill="#000" stroke="#009a9e" stroke-width="2.0" stroke-linejoin="round"/></g><path d="M416.3 321V342" stroke="#ff0000" stroke-width="1.2"/><path d="M546.4 321V342 M813.3 321V342" stroke="#00ff00" stroke-width="1.2"/><path d="M536.5 297.2 H556.5 L546.5 311.2 Z M542.59 302.4 L546.5 307.88 L550.41 302.4 Z" fill="#c983bd" fill-rule="evenodd"/><path d="M803.6 297.2 H823.6 L813.6 311.2 Z M809.69 302.4 L813.6 307.88 L817.51 302.4 Z" fill="#c983bd" fill-rule="evenodd"/></svg>
<div class="a" style="left:4px;top:154px;width:1087px;height:215px;overflow:hidden"><div class="a" style="left:-4px;top:-154px">
<div class="t" style="left:-216.40px;width:600px;text-align:center;top:319px;font-size:19.6px;color:#fff;font-weight:bold;transform:scaleX(1.0905);transform-origin:center center;-webkit-text-stroke:0.3px #fff;">103h:W</div>
<div class="t" style="left:-87.00px;width:600px;text-align:center;top:319px;font-size:19.6px;color:#fff;font-weight:bold;transform:scaleX(1.0928);transform-origin:center center;-webkit-text-stroke:0.3px #fff;">D:66h</div>
<div class="t" style="left:37.60px;width:600px;text-align:center;top:319px;font-size:19.6px;color:#fff;font-weight:bold;transform:scaleX(1.0220);transform-origin:center center;-webkit-text-stroke:0.3px #fff;">D:BBh</div>
<div class="t" style="left:377.00px;width:600px;text-align:center;top:319px;font-size:19.6px;color:#fff;font-weight:bold;transform:scaleX(1.1210);transform-origin:center center;-webkit-text-stroke:0.3px #fff;">Addr:152h:Write</div>
<div class="t" style="left:581.80px;width:600px;text-align:center;top:319px;font-size:19.6px;color:#fff;font-weight:bold;transform:scaleX(1.0608);transform-origin:center center;-webkit-text-stroke:0.3px #fff;">A:79h:R</div>
<div class="t" style="left:706.70px;width:600px;text-align:center;top:319px;font-size:19.6px;color:#fff;font-weight:bold;transform:scaleX(1.1111);transform-origin:center center;-webkit-text-stroke:0.3px #fff;">D:77h</div>
</div></div>
<div class="a" style="left:61px;top:321.5px;width:42.5px;height:19.5px;background:rgba(58,58,58,0.86);"></div>
<svg class="a" style="left:0;top:0" width="1280" height="800"><path d="M670.5 331 L674 321.2 H681.5 L685 331 L681.5 340.9 H674 Z" fill="rgba(0,0,0,0.64)" stroke="#d41414" stroke-width="1.05"/></svg>
<div class="t" style="left:53.3px;top:301px;font-size:17.5px;color:#c28df0;transform:scaleX(1.0098);transform-origin:left center;">I2C</div>
<div class="t" style="left:3.6px;top:350px;font-size:12.6px;color:#adadad;transform:scaleX(0.9589);transform-origin:left center;">40 µs</div>
<div class="t" style="left:-172.70px;width:600px;text-align:center;top:350px;font-size:12.6px;color:#adadad;transform:scaleX(0.9814);transform-origin:center center;">80 µs</div>
<div class="t" style="left:-64.00px;width:600px;text-align:center;top:350px;font-size:12.6px;color:#adadad;transform:scaleX(0.9767);transform-origin:center center;">120 µs</div>
<div class="t" style="left:44.70px;width:600px;text-align:center;top:350px;font-size:12.6px;color:#adadad;transform:scaleX(0.9767);transform-origin:center center;">160 µs</div>
<div class="t" style="left:153.40px;width:600px;text-align:center;top:350px;font-size:12.6px;color:#adadad;transform:scaleX(0.9767);transform-origin:center center;">200 µs</div>
<div class="t" style="left:262.10px;width:600px;text-align:center;top:350px;font-size:12.6px;color:#adadad;transform:scaleX(0.9767);transform-origin:center center;">240 µs</div>
<div class="t" style="left:370.80px;width:600px;text-align:center;top:350px;font-size:12.6px;color:#adadad;transform:scaleX(0.9767);transform-origin:center center;">280 µs</div>
<div class="t" style="left:479.50px;width:600px;text-align:center;top:350px;font-size:12.6px;color:#adadad;transform:scaleX(0.9767);transform-origin:center center;">320 µs</div>
<div class="t" style="left:588.20px;width:600px;text-align:center;top:350px;font-size:12.6px;color:#adadad;transform:scaleX(0.9767);transform-origin:center center;">360 µs</div>
<div class="t" style="left:696.90px;width:600px;text-align:center;top:350px;font-size:12.6px;color:#adadad;transform:scaleX(0.9767);transform-origin:center center;">400 µs</div>
<div class="t" style="left:485.80px;width:600px;text-align:right;top:156px;font-size:12.4px;color:#f2e60c;transform:scaleX(1.0717);transform-origin:right center;-webkit-text-stroke:0.3px #f2e60c;">700 mV</div>
<div class="t" style="left:485.80px;width:600px;text-align:right;top:184px;font-size:12.4px;color:#f2e60c;transform:scaleX(1.0717);transform-origin:right center;-webkit-text-stroke:0.3px #f2e60c;">300 mV</div>
<div class="t" style="left:485.80px;width:600px;text-align:right;top:205px;font-size:12.4px;color:#f2e60c;transform:scaleX(1.0477);transform-origin:right center;-webkit-text-stroke:0.3px #f2e60c;">0 V</div>
<div class="t" style="left:485.80px;width:600px;text-align:right;top:224px;font-size:12.4px;color:#1fc4d0;transform:scaleX(1.0717);transform-origin:right center;-webkit-text-stroke:0.3px #1fc4d0;">500 mV</div>
<div class="t" style="left:485.80px;width:600px;text-align:right;top:252px;font-size:12.4px;color:#1fc4d0;transform:scaleX(1.0717);transform-origin:right center;-webkit-text-stroke:0.3px #1fc4d0;">100 mV</div>
<div class="t" style="left:485.80px;width:600px;text-align:right;top:273px;font-size:12.4px;color:#1fc4d0;transform:scaleX(1.0668);transform-origin:right center;-webkit-text-stroke:0.3px #1fc4d0;">-200 mV</div>
<svg class="a" style="left:0;top:0" width="1280" height="800">
<path d="M9.4 164.9 H32.6 Q33.6 164.9 34.4 165.7 L46.2 178.9 L34.4 192.1 Q33.6 192.9 32.6 192.9 H9.4 Q6.9 192.9 6.9 190.4 V167.4 Q6.9 164.9 9.4 164.9 Z" fill="#1f1b07" stroke="#e6d91c" stroke-width="1.7"/>
<path d="M9.4 253 H32.6 Q33.6 253 34.4 253.8 L46.2 266.5 L34.4 279.3 Q33.6 280.1 32.6 280.1 H9.4 Q6.9 280.1 6.9 277.6 V255.5 Q6.9 253 9.4 253 Z" fill="#071516" stroke="#1fb9c6" stroke-width="1.7"/>
<path d="M9.6 317.5 H32 Q33.2 317.5 34 318.4 L45.9 331.2 L34 344 Q33.2 344.9 32 344.9 H9.6 Q6.9 344.9 6.9 342.2 V320.2 Q6.9 317.5 9.6 317.5 Z" fill="#cc99ff"/>
<path d="M1069 197.5 L1081 187.3 V195.5 H1090.6 V199.7 H1081 V207.5 Z" fill="#f8ec10"/>
</svg>
<div class="t" style="left:-274.00px;width:600px;text-align:center;top:172px;font-size:12.3px;color:#f2e630;font-weight:bold;transform:scaleX(0.9143);transform-origin:center center;">C 1</div>
<div class="t" style="left:-273.80px;width:600px;text-align:center;top:259px;font-size:12.3px;color:#30d4e0;font-weight:bold;transform:scaleX(0.9404);transform-origin:center center;">C 2</div>
<div class="t" style="left:-274.80px;width:600px;text-align:center;top:325px;font-size:12px;color:#1c0c2c;transform:scaleX(0.9196);transform-origin:center center;">B1</div>
<svg class="a" style="left:0;top:0" width="1280" height="800" viewBox="0 0 1280 800"><defs><clipPath id="co"><rect x="3" y="64" width="1088" height="61"/></clipPath></defs><rect x="537.3" y="69" width="106.7" height="54.5" fill="#000"/><g clip-path="url(#co)"><path d="M3 90.2H1052" stroke="#f2e622" stroke-width="1.5"/><path d="M55 95.6H1062" stroke="#ff28e8" stroke-width="1.2"/><path d="M56 97.7H1062" stroke="#dcdcdc" stroke-width="1.2" stroke-dasharray="5 5"/><rect x="2.5" y="89.3" width="53" height="27.2" fill="#d1c42c"/><path d="M3.5 101V116M7.6 101V116M11 101V116M15.1 101V116M18.5 101V116M22.6 101V116M26.7 101V116M30.8 101V116M34.9 101V116M37.4 101V116M40.8 101V116M43.3 101V116M47.4 101V116M49.9 101V116M52.4 101V116" stroke="#bdb024" stroke-width="1"/><rect x="2.5" y="114.8" width="53" height="1.6" fill="#f3e82c"/><path d="M3 115.5h2v3.2h-2zM5.8 115.5h2v1.8h-2zM9.1 115.5h1.6v1.8h-1.6zM12 115.5h1.6v3.2h-1.6zM14.6 115.5h1.6v3.2h-1.6zM17 115.5h1.6v2.4h-1.6zM19.9 115.5h2.4v3.2h-2.4zM23.1 115.5h1.6v1.8h-1.6zM25.5 115.5h1.6v2.4h-1.6zM27.9 115.5h1.6v3h-1.6zM30.5 115.5h1.6v2.4h-1.6zM32.9 115.5h2.4v2.4h-2.4zM36.3 115.5h2v1.8h-2zM39.3 115.5h2v2.4h-2zM42.1 115.5h2v1.8h-2zM45.1 115.5h2v1.8h-2zM48.4 115.5h2.4v3h-2.4zM51.6 115.5h2v3h-2z" fill="#f3e82c"/><rect x="137.5" y="89.3" width="53" height="27.2" fill="#d1c42c"/><path d="M138.5 101V116M141.9 101V116M146 101V116M149.4 101V116M151.9 101V116M155.3 101V116M158.7 101V116M162.8 101V116M165.3 101V116M167.8 101V116M171.2 101V116M173.7 101V116M177.8 101V116M181.2 101V116M184.6 101V116M187.1 101V116" stroke="#bdb024" stroke-width="1"/><rect x="137.5" y="114.8" width="53" height="1.6" fill="#f3e82c"/><path d="M138 115.5h2v3h-2zM141 115.5h2.4v1.8h-2.4zM144.4 115.5h1.6v2.4h-1.6zM147.3 115.5h1.6v1.8h-1.6zM149.7 115.5h2v3h-2zM153 115.5h2v3h-2zM156 115.5h1.6v3h-1.6zM158.6 115.5h1.6v3.2h-1.6zM161 115.5h1.6v3h-1.6zM163.9 115.5h2.4v3h-2.4zM167.1 115.5h2v3h-2zM170.4 115.5h2.4v1.8h-2.4zM173.8 115.5h2.4v3h-2.4zM177.2 115.5h1.6v1.8h-1.6zM180.1 115.5h1.6v3h-1.6zM182.7 115.5h1.6v1.8h-1.6zM185.1 115.5h2.4v3.2h-2.4zM188.3 115.5h1.6v3h-1.6z" fill="#f3e82c"/><rect x="526" y="89.3" width="51.5" height="27.2" fill="#d1c42c"/><path d="M527 101V116M530.4 101V116M534.5 101V116M537.9 101V116M540.4 101V116M542.9 101V116M547 101V116M549.5 101V116M552.9 101V116M556.3 101V116M558.8 101V116M561.3 101V116M565.4 101V116M569.5 101V116M572 101V116M576.1 101V116" stroke="#bdb024" stroke-width="1"/><rect x="526" y="114.8" width="51.5" height="1.6" fill="#f3e82c"/><path d="M526.5 115.5h1.6v2.4h-1.6zM529.1 115.5h2v2.4h-2zM531.9 115.5h2v3h-2zM534.7 115.5h2v2.4h-2zM538 115.5h2v3.2h-2zM541.3 115.5h2.4v3h-2.4zM544.7 115.5h2v3h-2zM547.7 115.5h2v2.4h-2zM550.5 115.5h2v2.4h-2zM553.8 115.5h2v3h-2zM556.6 115.5h1.6v3.2h-1.6zM559.2 115.5h2.4v3h-2.4zM562.4 115.5h2v1.8h-2zM565.4 115.5h2v3h-2zM568.4 115.5h2v3h-2zM571.4 115.5h2.4v2.4h-2.4zM575.1 115.5h1.6v3.2h-1.6z" fill="#f3e82c"/><rect x="590.5" y="89.3" width="66.5" height="27.2" fill="#d1c42c"/><path d="M591.5 101V116M594.9 101V116M598.3 101V116M602.4 101V116M605.8 101V116M609.2 101V116M612.6 101V116M616.7 101V116M620.8 101V116M624.9 101V116M628.3 101V116M631.7 101V116M635.1 101V116M639.2 101V116M642.6 101V116M646.7 101V116M650.1 101V116M653.5 101V116M656 101V116" stroke="#bdb024" stroke-width="1"/><rect x="590.5" y="114.8" width="66.5" height="1.6" fill="#f3e82c"/><path d="M591 115.5h2v3h-2zM594 115.5h2.4v2.4h-2.4zM597.7 115.5h1.6v2.4h-1.6zM600.3 115.5h2v3h-2zM603.6 115.5h1.6v3.2h-1.6zM606 115.5h2.4v3.2h-2.4zM609.4 115.5h2.4v3h-2.4zM613.1 115.5h1.6v2.4h-1.6zM615.5 115.5h2.4v3.2h-2.4zM619.2 115.5h2.4v2.4h-2.4zM622.4 115.5h2.4v2.4h-2.4zM626.1 115.5h2.4v1.8h-2.4zM629.5 115.5h1.6v2.4h-1.6zM631.9 115.5h1.6v1.8h-1.6zM634.5 115.5h1.6v3.2h-1.6zM636.9 115.5h2.4v1.8h-2.4zM640.3 115.5h2v3h-2zM643.3 115.5h2.4v1.8h-2.4zM647 115.5h1.6v2.4h-1.6zM649.9 115.5h2v1.8h-2zM652.9 115.5h2v3h-2zM655.9 115.5h1.6v3h-1.6z" fill="#f3e82c"/><rect x="726.5" y="89.3" width="92" height="27.2" fill="#d1c42c"/><path d="M727.5 101V116M731.6 101V116M735.7 101V116M739.1 101V116M741.6 101V116M745 101V116M749.1 101V116M753.2 101V116M756.6 101V116M760.7 101V116M764.1 101V116M767.5 101V116M770 101V116M773.4 101V116M776.8 101V116M780.9 101V116M785 101V116M789.1 101V116M792.5 101V116M795.9 101V116M798.4 101V116M800.9 101V116M805 101V116M808.4 101V116M812.5 101V116M815.9 101V116" stroke="#bdb024" stroke-width="1"/><rect x="726.5" y="114.8" width="92" height="1.6" fill="#f3e82c"/><path d="M727 115.5h1.6v1.8h-1.6zM729.6 115.5h2.4v1.8h-2.4zM733 115.5h1.6v3h-1.6zM735.9 115.5h2.4v2.4h-2.4zM739.3 115.5h2.4v3.2h-2.4zM742.7 115.5h2v2.4h-2zM745.7 115.5h2v3.2h-2zM749 115.5h2v3.2h-2zM751.8 115.5h2.4v3h-2.4zM755.5 115.5h2v3.2h-2zM758.5 115.5h2v1.8h-2zM761.5 115.5h2v3.2h-2zM764.5 115.5h1.6v3.2h-1.6zM766.9 115.5h1.6v3.2h-1.6zM769.3 115.5h2v1.8h-2zM772.1 115.5h2v1.8h-2zM775.1 115.5h2.4v3h-2.4zM778.3 115.5h2v1.8h-2zM781.1 115.5h2v3h-2zM783.9 115.5h2.4v3h-2.4zM787.3 115.5h2v3.2h-2zM790.6 115.5h2.4v1.8h-2.4zM793.8 115.5h1.6v3h-1.6zM796.4 115.5h2.4v3h-2.4zM800.1 115.5h2v1.8h-2zM803.1 115.5h2v3h-2zM806.4 115.5h2.4v2.4h-2.4zM809.6 115.5h1.6v3h-1.6zM812.5 115.5h2v1.8h-2zM815.8 115.5h2.4v2.4h-2.4z" fill="#f3e82c"/><path d="M3 75H538 M643 75H1046" stroke="#39c6d6" stroke-width="1.9"/><path d="M538 75.2H643" stroke="#2597a3" stroke-width="1.5"/><path d="M2.93 75V102.3M9.33 75V102.3M14.53 75V102.3M19.53 75V102.3M19.53 76.2H20.93V102.3M23.93 75V102.3M23.93 76.2H26.53V84M28.93 75V102.3M28.93 76.2H30.93V89M32.13 75V102.3M32.13 76.2H34.13V89M35.33 75V102.3M40.93 75V102.3M46.13 75V102.3M46.13 76.2H47.53V102.3M50.53 75V102.3M50.53 76.2H52.53V102.3M53.73 75V102.3" stroke="#2ea3af" stroke-width="1.5" fill="none"/><path d="M4.5 101V105M8.5 101V104.5M12.5 101V105M16.5 101V105M26 101V105M32.5 101V103.5M42 101V103.5M50 101V105" stroke="#33b5c2" stroke-width="1.1" fill="none"/><path d="M142.39 75V102.3M155.19 75V102.3M155.19 76.2H157.19V102.3M159.59 75V102.3M164.59 75V102.3M170.39 75V102.3M170.39 76.2H171.79V89M175.59 75V102.3M181.99 75V102.3M181.99 76.2H184.59V84" stroke="#2ea3af" stroke-width="1.5" fill="none"/><path d="M139.5 101V105M146 101V105M150 101V103.5M159.5 101V103.5M166 101V105M175.5 101V104.5M182 101V104.5" stroke="#33b5c2" stroke-width="1.1" fill="none"/><path d="M526.93 75V102.3M526.93 76.2H529.53V102.3M537.73 75V102.3M537.73 76.2H539.13V102.3M542.13 75V102.3M542.13 76.2H543.53V102.3M545.33 75V102.3M549.13 75V102.3M549.13 76.2H550.53V84M552.93 75V102.3M552.93 76.2H556.33V102.3M563.13 75V102.3M563.13 76.2H565.13V102.3M567.53 75V102.3M571.93 75V102.3M571.93 76.2H574.53V89" stroke="#2ea3af" stroke-width="1.5" fill="none"/><path d="M528 101V104.5M534.5 101V103.5M542.5 101V104.5M552 101V105M558.5 101V105M565 101V103.5M571.5 101V105M575.5 101V105" stroke="#33b5c2" stroke-width="1.1" fill="none"/><path d="M596.96 75V102.3M596.96 76.2H599.56V89M602.56 75V102.3M602.56 76.2H604.56V102.3M605.76 75V102.3M605.76 76.2H609.16V84M610.36 75V102.3M610.36 76.2H613.76V89M626.36 75V102.3M626.36 76.2H628.36V89M629.56 75V102.3M629.56 76.2H632.16V89M633.36 75V102.3M633.36 76.2H635.36V84M637.16 75V102.3M637.16 76.2H639.16V89M640.36 75V102.3M644.16 75V102.3M644.16 76.2H645.56V84M649.36 75V102.3M649.36 76.2H652.76V89" stroke="#2ea3af" stroke-width="1.5" fill="none"/><path d="M592.5 101V105M596.5 101V103.5M604.5 101V104.5M608.5 101V104.5M618 101V104.5M624.5 101V103.5M628.5 101V104.5M635 101V105M639 101V104.5M645.5 101V104.5M649.5 101V104.5" stroke="#33b5c2" stroke-width="1.1" fill="none"/><path d="M726.55 75V102.3M729.75 75V102.3M729.75 76.2H731.15V89M733.55 75V102.3M733.55 76.2H735.55V89M736.75 75V102.3M743.15 75V102.3M743.15 76.2H745.15V102.3M747.55 75V102.3M747.55 76.2H750.95V89M754.75 75V102.3M754.75 76.2H756.15V102.3M758.55 75V102.3M765.75 75V102.3M765.75 76.2H767.15V102.3M768.95 75V102.3M768.95 76.2H771.55V102.3M772.75 75V102.3M772.75 76.2H775.35V102.3M778.35 75V102.3M778.35 76.2H781.75V102.3M784.75 75V102.3M784.75 76.2H786.75V84M787.95 75V102.3M793.75 75V102.3M798.15 75V102.3M798.15 76.2H799.55V102.3M802.55 75V102.3M802.55 76.2H805.15V102.3M806.95 75V102.3M806.95 76.2H809.55V102.3M811.95 75V102.3M815.75 75V102.3" stroke="#2ea3af" stroke-width="1.5" fill="none"/><path d="M728.5 101V104.5M738 101V103.5M742 101V103.5M751.5 101V103.5M759.5 101V103.5M767.5 101V104.5M777 101V105M781 101V103.5M790.5 101V105M794.5 101V103.5M801 101V104.5M805 101V104.5M809 101V105M817 101V105" stroke="#33b5c2" stroke-width="1.1" fill="none"/><path d="M92.5 68V110" stroke="rgba(228,228,228,0.92)" stroke-width="1.2" stroke-dasharray="5 2.6"/><path d="M201.2 68V110" stroke="rgba(228,228,228,0.92)" stroke-width="1.2" stroke-dasharray="5 2.6"/><path d="M309.9 68V110" stroke="rgba(228,228,228,0.92)" stroke-width="1.2" stroke-dasharray="5 2.6"/><path d="M418.6 68V110" stroke="rgba(228,228,228,0.92)" stroke-width="1.2" stroke-dasharray="5 2.6"/><path d="M527.3 68V110" stroke="rgba(228,228,228,0.92)" stroke-width="1.2" stroke-dasharray="5 2.6"/><path d="M636 68V110" stroke="rgba(228,228,228,0.92)" stroke-width="1.2" stroke-dasharray="5 2.6"/><path d="M744.7 68V110" stroke="rgba(228,228,228,0.92)" stroke-width="1.2" stroke-dasharray="5 2.6"/><path d="M853.4 68V110" stroke="rgba(228,228,228,0.92)" stroke-width="1.2" stroke-dasharray="5 2.6"/><path d="M962.1 68V110" stroke="rgba(228,228,228,0.92)" stroke-width="1.2" stroke-dasharray="5 2.6"/><path d="M1070.8 68V110" stroke="rgba(228,228,228,0.92)" stroke-width="1.2" stroke-dasharray="5 2.6"/><rect x="28" y="89" width="1" height="29.5" fill="#3a3a30"/><rect x="2.5" y="89.6" width="25.5" height="11.4" fill="#fbf81e"/><rect x="30" y="89.6" width="11.5" height="11.4" fill="#fbf81e"/><rect x="42" y="89.6" width="12.3" height="11.4" fill="#22f8ff"/><rect x="28.6" y="89.3" width="1.2" height="12" fill="#22ff22"/><rect x="54.4" y="89.3" width="1.2" height="12" fill="#f51f1f"/><rect x="139.6" y="90.1" width="21.8" height="10.4" rx="4.2" fill="#0e0e0e" stroke="#e6dc2a" stroke-width="1.2"/><path d="M147.1 97H154.1" stroke="#fff" stroke-width="1.6" stroke-dasharray="1.5 0.9"/><rect x="164" y="89.6" width="11" height="11.4" fill="#22f8ff"/><rect x="176.5" y="89.6" width="12" height="11.4" fill="#22f8ff"/><rect x="136.8" y="89.3" width="1.2" height="12" fill="#22ff22"/><rect x="150.1" y="89.3" width="1.2" height="12" fill="#f51f1f"/><rect x="161.9" y="89.3" width="1.8" height="12" fill="#f51f1f"/><rect x="175" y="89.3" width="1.2" height="12" fill="#f51f1f"/><rect x="189.7" y="89.3" width="1.2" height="12" fill="#f51f1f"/><rect x="524.6" y="90.1" width="24.8" height="10.4" rx="4.2" fill="#0e0e0e" stroke="#e6dc2a" stroke-width="1.2"/><path d="M533.6 97H540.6" stroke="#fff" stroke-width="1.6" stroke-dasharray="1.5 0.9"/><rect x="551.5" y="89.6" width="10.8" height="11.4" fill="#22f8ff"/><rect x="564.2" y="89.6" width="12" height="11.4" fill="#22f8ff"/><rect x="550" y="89.3" width="1.2" height="12" fill="#f51f1f"/><rect x="562.4" y="89.3" width="1.6" height="12" fill="#f51f1f"/><rect x="576.6" y="89.3" width="1.2" height="12" fill="#f51f1f"/><rect x="592.6" y="90.1" width="21.3" height="10.4" rx="4.2" fill="#0e0e0e" stroke="#e6dc2a" stroke-width="1.2"/><path d="M599.85 97H606.85" stroke="#fff" stroke-width="1.6" stroke-dasharray="1.5 0.9"/><rect x="617.3" y="89.6" width="12" height="11.4" fill="#fbf81e"/><rect x="631.2" y="89.6" width="11.2" height="11.4" fill="#22f8ff"/><rect x="644" y="89.6" width="11.5" height="11.4" fill="#22f8ff"/><rect x="589.7" y="89.3" width="1.2" height="12" fill="#22ff22"/><rect x="602.1" y="89.3" width="2.2" height="12" fill="#f51f1f"/><rect x="615.1" y="89.3" width="1.8" height="12" fill="#f51f1f"/><rect x="629.4" y="89.3" width="1.6" height="12" fill="#f51f1f"/><rect x="642.6" y="89.3" width="1.2" height="12" fill="#e89a9a"/><rect x="656.2" y="89.3" width="1.2" height="12" fill="#f51f1f"/><rect x="728.6" y="90.1" width="21.3" height="10.4" rx="4.2" fill="#0e0e0e" stroke="#e6dc2a" stroke-width="1.2"/><path d="M735.85 97H742.85" stroke="#fff" stroke-width="1.6" stroke-dasharray="1.5 0.9"/><rect x="753.2" y="89.6" width="11.1" height="11.4" fill="#22f8ff"/><rect x="765.8" y="89.6" width="11.7" height="11.4" fill="#22f8ff"/><rect x="779.3" y="89.6" width="11" height="11.4" fill="#fbf81e"/><rect x="792.2" y="89.6" width="11.1" height="11.4" fill="#22f8ff"/><rect x="804.8" y="89.6" width="12.5" height="11.4" fill="#22f8ff"/><rect x="725.7" y="89.3" width="1.2" height="12" fill="#22ff22"/><rect x="739.1" y="89.3" width="1.8" height="12" fill="#f51f1f"/><rect x="751.1" y="89.3" width="1.8" height="12" fill="#f51f1f"/><rect x="764.4" y="89.3" width="1.2" height="12" fill="#f51f1f"/><rect x="777.9" y="89.3" width="1.2" height="12" fill="#22ff22"/><rect x="790.4" y="89.3" width="1.6" height="12" fill="#f51f1f"/><rect x="803.4" y="89.3" width="1.2" height="12" fill="#f51f1f"/><rect x="817.9" y="89.3" width="1.2" height="12" fill="#f51f1f"/></g><rect x="1084" y="101.8" width="6.5" height="3" fill="#fff020"/></svg>
<div class="t" style="left:-207.70px;width:600px;text-align:center;top:107px;font-size:12.6px;color:#bebebe;transform:scaleX(1.0116);transform-origin:center center;-webkit-text-stroke:0.2px #bebebe;">-1.6 ms</div>
<div class="t" style="left:-99.00px;width:600px;text-align:center;top:107px;font-size:12.6px;color:#bebebe;transform:scaleX(1.0116);transform-origin:center center;-webkit-text-stroke:0.2px #bebebe;">-1.2 ms</div>
<div class="t" style="left:9.70px;width:600px;text-align:center;top:107px;font-size:12.6px;color:#bebebe;transform:scaleX(1.0287);transform-origin:center center;-webkit-text-stroke:0.2px #bebebe;">-800 µs</div>
<div class="t" style="left:118.40px;width:600px;text-align:center;top:107px;font-size:12.6px;color:#bebebe;transform:scaleX(1.0287);transform-origin:center center;-webkit-text-stroke:0.2px #bebebe;">-400 µs</div>
<div class="t" style="left:227.10px;width:600px;text-align:center;top:107px;font-size:12.6px;color:#bebebe;transform:scaleX(1.0114);transform-origin:center center;-webkit-text-stroke:0.2px #bebebe;">0 s</div>
<div class="t" style="left:335.80px;width:600px;text-align:center;top:107px;font-size:12.6px;color:#bebebe;transform:scaleX(1.0108);transform-origin:center center;-webkit-text-stroke:0.2px #bebebe;">400 µs</div>
<div class="t" style="left:444.50px;width:600px;text-align:center;top:107px;font-size:12.6px;color:#bebebe;transform:scaleX(1.0108);transform-origin:center center;-webkit-text-stroke:0.2px #bebebe;">800 µs</div>
<div class="t" style="left:553.20px;width:600px;text-align:center;top:107px;font-size:12.6px;color:#bebebe;transform:scaleX(0.9731);transform-origin:center center;-webkit-text-stroke:0.2px #bebebe;">1.2 ms</div>
<div class="t" style="left:661.90px;width:600px;text-align:center;top:107px;font-size:12.6px;color:#bebebe;transform:scaleX(0.9731);transform-origin:center center;-webkit-text-stroke:0.2px #bebebe;">1.6 ms</div>
<div class="t" style="left:770.60px;width:600px;text-align:center;top:107px;font-size:12.6px;color:#bebebe;transform:scaleX(0.9888);transform-origin:center center;-webkit-text-stroke:0.2px #bebebe;">2 ms</div>
<svg class="a" style="left:0;top:0" width="1280" height="800" viewBox="0 0 1280 800"><rect x="538.9" y="70.65" width="103.5" height="51.2" rx="0.5" fill="none" stroke="rgba(172,172,172,0.86)" stroke-width="5.3"/><path d="M7.5 81.5 H22 L28 88 V96 H7.5 Z" fill="#4d471c" stroke="#c9bb2a" stroke-width="1"/><path d="M7.5 97 H28 L22 108.5 H9 Q7.5 108.5 7.5 107 Z" fill="#234a4c" stroke="#2f9aa4" stroke-width="1"/><path d="M8.5 88 H22.5 L29.5 95.4 L22.5 102.8 H8.5 Q6.7 102.8 6.7 101 V89.8 Q6.7 88 8.5 88 Z" fill="#c594f2"/><polygon points="26.3,76.8 34,86.3 18.6,86.3" fill="#e8455a" stroke="#5a3a7a" stroke-width="0.6"/><path d="M26.3 79.5V83.4 M26.3 84.3V85.5" stroke="#fff" stroke-width="1.1"/><path d="M18.4 67.8 H38.4 L28.4 81.6 Z M24.11 72.4 L28.4 78.27 L32.69 72.4 Z" fill="#c983bd" fill-rule="evenodd"/><path d="M128.2 67.8 H148.2 L138.2 81.6 Z M133.91 72.4 L138.2 78.27 L142.49 72.4 Z" fill="#c983bd" fill-rule="evenodd"/><path d="M516 67.8 H536 L526 81.6 Z M521.71 72.4 L526 78.27 L530.29 72.4 Z" fill="#c983bd" fill-rule="evenodd"/><path d="M581 67.8 H601 L591 81.6 Z M586.71 72.4 L591 78.27 L595.29 72.4 Z" fill="#c983bd" fill-rule="evenodd"/><path d="M607.7 67.8 H627.7 L617.7 81.6 Z M613.41 72.4 L617.7 78.27 L621.99 72.4 Z" fill="#c983bd" fill-rule="evenodd"/><path d="M717.2 67.8 H737.2 L727.2 81.6 Z M722.91 72.4 L727.2 78.27 L731.49 72.4 Z" fill="#c983bd" fill-rule="evenodd"/><path d="M768.9 67.8 H788.9 L778.9 81.6 Z M774.61 72.4 L778.9 78.27 L783.19 72.4 Z" fill="#c983bd" fill-rule="evenodd"/><polygon points="522.3,74 530.3,74 526.3,78.6" fill="#f58a1f"/><path d="M518.3 79.3 H536 V98.3 H530.3 L526.8 104.3 L523.3 98.3 H518.3 Z" fill="#000" stroke="#f58a1f" stroke-width="2"/><path d="M522.3 84.2H531.3 M526.8 84.2V94.2" stroke="#f58a1f" stroke-width="2.1"/><path d="M1047.5 76.3 H1080.5 Q1083.7 76.3 1083.7 79.5 V111.5 Q1083.7 114.5 1081.7 112.5 L1046.3 78.3 Q1044.5 76.3 1047.5 76.3 Z" fill="#4b4b4b" stroke="#12a2d8" stroke-width="1.8"/><circle cx="1075.6" cy="83.7" r="4.4" fill="none" stroke="#12a2d8" stroke-width="1.6"/><path d="M1072 87.5 L1064.8 94.2" stroke="#12a2d8" stroke-width="2.6" stroke-linecap="round"/></svg>
<div class="t" style="left:-282.40px;width:600px;text-align:center;top:90px;font-size:11.5px;color:#26143a;transform:scaleX(0.8886);transform-origin:center center;">B1</div>
</div></body></html>
